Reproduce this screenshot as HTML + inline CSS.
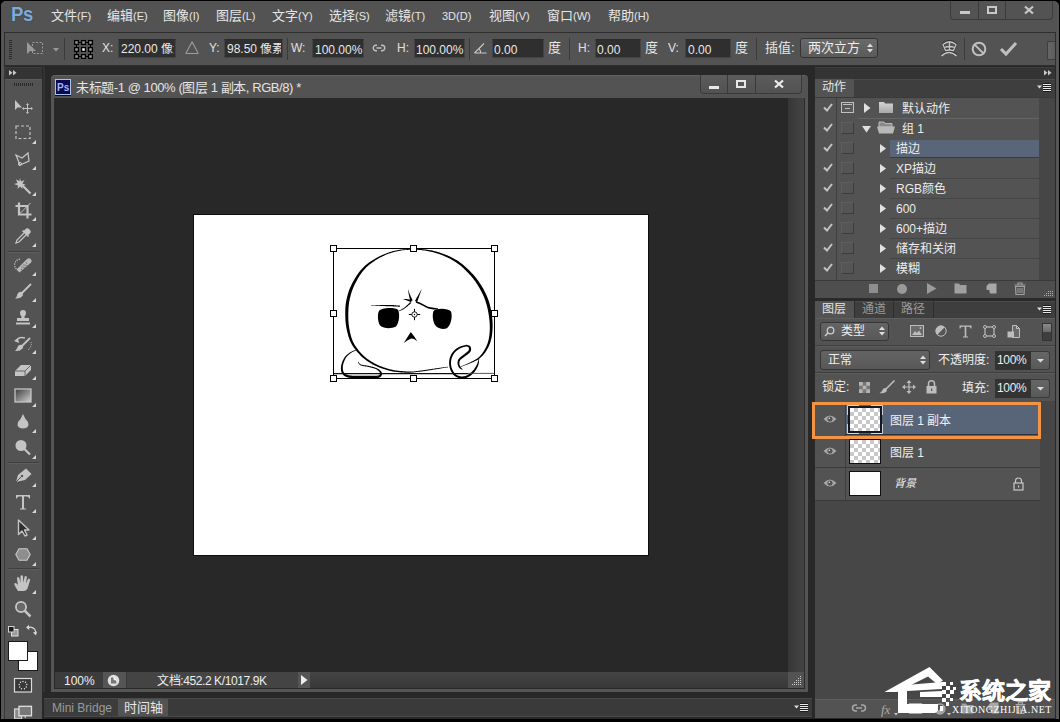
<!DOCTYPE html>
<html lang="zh-CN">
<head>
<meta charset="utf-8">
<style>
*{margin:0;padding:0;box-sizing:border-box}
html,body{width:1060px;height:722px;overflow:hidden;background:#000}
body{position:relative;font-family:"Liberation Sans",sans-serif;color:#e8e8e8;font-size:12px}
.a{position:absolute}
svg{position:absolute;overflow:visible}
.t{position:absolute;white-space:nowrap;line-height:1}
</style>
</head>
<body>
<!-- window frame -->
<div class="a" style="left:1px;top:1px;width:1058px;height:720px;background:#565656;border-radius:5px 5px 0 0"></div>
<!-- menu bar -->
<div class="a" style="left:1px;top:1px;width:1056px;height:31px;background:#535353;border-radius:5px 5px 0 0"></div>


<!-- Ps logo -->
<div class="t" style="left:11px;top:2px;font:bold 21px 'Liberation Sans',sans-serif;color:#7fa9d8;letter-spacing:-0.5px;text-shadow:0 0 1.5px #2c3a4c;transform:scaleX(0.88);transform-origin:0 0">Ps</div>
<!-- menu items -->
<div class="t" style="left:51px;top:9px;font-size:13px;color:#e6e6e6">文件<span style="font-size:11px">(F)</span></div>
<div class="t" style="left:107px;top:9px;font-size:13px;color:#e6e6e6">编辑<span style="font-size:11px">(E)</span></div>
<div class="t" style="left:163px;top:9px;font-size:13px;color:#e6e6e6">图像<span style="font-size:11px">(I)</span></div>
<div class="t" style="left:216px;top:9px;font-size:13px;color:#e6e6e6">图层<span style="font-size:11px">(L)</span></div>
<div class="t" style="left:272px;top:9px;font-size:13px;color:#e6e6e6">文字<span style="font-size:11px">(Y)</span></div>
<div class="t" style="left:329px;top:9px;font-size:13px;color:#e6e6e6">选择<span style="font-size:11px">(S)</span></div>
<div class="t" style="left:385px;top:9px;font-size:13px;color:#e6e6e6">滤镜<span style="font-size:11px">(T)</span></div>
<div class="t" style="left:442px;top:9px;font-size:13px;color:#e6e6e6"><span style="font-size:11px">3D(D)</span></div>
<div class="t" style="left:489px;top:9px;font-size:13px;color:#e6e6e6">视图<span style="font-size:11px">(V)</span></div>
<div class="t" style="left:547px;top:9px;font-size:13px;color:#e6e6e6">窗口<span style="font-size:11px">(W)</span></div>
<div class="t" style="left:608px;top:9px;font-size:13px;color:#e6e6e6">帮助<span style="font-size:11px">(H)</span></div>

<!-- workspace dark -->
<div class="a" style="left:4px;top:66px;width:1052px;height:654px;background:#282828"></div>

<!-- options bar -->
<div class="a" style="left:4px;top:32px;width:1052px;height:34px;background:#535353;border-top:1px solid #2e2e2e;border-bottom:1px solid #2e2e2e;border-left:1px solid #2e2e2e;border-right:1px solid #2e2e2e"></div>


<!-- window controls -->
<div class="a" style="left:950px;top:1px;width:103px;height:19px;background:#535353;border:1px solid #3b3b3b;border-top:none;border-radius:0 0 4px 4px"></div>
<div class="a" style="left:978px;top:1px;width:1px;height:18px;background:#3b3b3b"></div>
<div class="a" style="left:1005px;top:1px;width:1px;height:18px;background:#3b3b3b"></div>
<div class="a" style="left:960px;top:11px;width:10px;height:3px;background:#c8c8c8"></div>
<div class="a" style="left:987px;top:6px;width:10px;height:8px;border:2px solid #c8c8c8;border-top-width:2px"></div>
<svg style="left:1024px;top:6px" width="10" height="8"><path d="M1 0.5 L9 7.5 M9 0.5 L1 7.5" stroke="#c8c8c8" stroke-width="2.2"/></svg>

<!-- options bar content -->
<div class="a" style="left:9px;top:40px;width:3px;height:20px;background:repeating-linear-gradient(#2a2a2a 0 1px,transparent 1px 2px)"></div>
<svg style="left:26px;top:41px" width="18" height="14">
 <path d="M1 1 L1 13 L4 10 L10 10 Z" fill="#9a9a9a"/>
 <rect x="6.5" y="1.5" width="10" height="11" fill="none" stroke="#9a9a9a" stroke-dasharray="2 1.5"/>
</svg>
<svg style="left:53px;top:48px" width="6" height="4"><path d="M0 0 L6 0 L3 3.5 Z" fill="#9a9a9a"/></svg>
<div class="a" style="left:64px;top:38px;width:1px;height:22px;background:#3a3a3a"></div>
<svg style="left:74px;top:40px" width="20" height="20">
 <path d="M5 2.5 H7 M12 2.5 H14 M5 16.5 H7 M12 16.5 H14 M2.5 5 V7 M2.5 12 V14 M16.5 5 V7 M16.5 12 V14" stroke="#000" stroke-width="1.1"/>
 <rect x="0.6" y="0.6" width="3.8" height="3.8" fill="#999" stroke="#000" stroke-width="1.3"/><rect x="7.6" y="0.6" width="3.8" height="3.8" fill="#999" stroke="#000" stroke-width="1.3"/><rect x="14.6" y="0.6" width="3.8" height="3.8" fill="#999" stroke="#000" stroke-width="1.3"/><rect x="0.6" y="7.6" width="3.8" height="3.8" fill="#999" stroke="#000" stroke-width="1.3"/><rect x="7.6" y="7.6" width="3.8" height="3.8" fill="#fff" stroke="#000" stroke-width="1.3"/><rect x="14.6" y="7.6" width="3.8" height="3.8" fill="#999" stroke="#000" stroke-width="1.3"/><rect x="0.6" y="14.6" width="3.8" height="3.8" fill="#999" stroke="#000" stroke-width="1.3"/><rect x="7.6" y="14.6" width="3.8" height="3.8" fill="#999" stroke="#000" stroke-width="1.3"/><rect x="14.6" y="14.6" width="3.8" height="3.8" fill="#999" stroke="#000" stroke-width="1.3"/>
</svg>
<div class="t" style="left:102px;top:42px;font-size:12px;color:#e0e0e0">X:</div>
<div class="a" style="left:118px;top:39px;width:58px;height:19px;background:#2f2f2f;border:1px solid #444;border-top-color:#2a2a2a"></div>
<div class="t" style="left:121px;top:43px;font-size:12px;color:#e8e8e8;width:53px;overflow:hidden">220.00 像素</div>
<div class="t" style="left:185px;top:41px;font-size:14px;color:#cfcfcf">△</div>
<div class="t" style="left:209px;top:42px;font-size:12px;color:#e0e0e0">Y:</div>
<div class="a" style="left:224px;top:39px;width:59px;height:19px;background:#2f2f2f;border:1px solid #444;border-top-color:#2a2a2a"></div>
<div class="t" style="left:227px;top:43px;font-size:12px;color:#e8e8e8;width:54px;overflow:hidden">98.50 像素</div>
<div class="a" style="left:287px;top:38px;width:1px;height:22px;background:#3a3a3a"></div>
<div class="t" style="left:291px;top:42px;font-size:12px;color:#e0e0e0">W:</div>
<div class="a" style="left:312px;top:39px;width:52px;height:19px;background:#2f2f2f;border:1px solid #444;border-top-color:#2a2a2a"></div>
<div class="t" style="left:315px;top:44px;font-size:12px;color:#e8e8e8">100.00%</div>
<svg style="left:373px;top:44px" width="12" height="8"><path d="M4 1.2 H3 a2.8 2.8 0 0 0 0 5.6 H4 M8 1.2 H9 a2.8 2.8 0 0 1 0 5.6 H8 M3.5 4 H8.5" fill="none" stroke="#c0c0c0" stroke-width="1.4"/></svg>
<div class="t" style="left:397px;top:42px;font-size:12px;color:#e0e0e0">H:</div>
<div class="a" style="left:414px;top:39px;width:51px;height:19px;background:#2f2f2f;border:1px solid #444;border-top-color:#2a2a2a"></div>
<div class="t" style="left:416px;top:44px;font-size:12px;color:#e8e8e8">100.00%</div>
<div class="a" style="left:469px;top:38px;width:1px;height:22px;background:#3a3a3a"></div>
<svg style="left:474px;top:42px" width="13" height="12"><path d="M0.5 11 H12.5 M0.5 11 L10 1.5 M6.5 11 A6 6 0 0 0 5 6.5" fill="none" stroke="#c8c8c8" stroke-width="1.1"/></svg>
<div class="a" style="left:492px;top:39px;width:52px;height:19px;background:#2f2f2f;border:1px solid #444;border-top-color:#2a2a2a"></div>
<div class="t" style="left:494px;top:44px;font-size:12px;color:#e8e8e8">0.00</div>
<div class="t" style="left:548px;top:41px;font-size:13px;color:#e8e8e8">度</div>
<div class="a" style="left:569px;top:38px;width:1px;height:22px;background:#3a3a3a"></div>
<div class="t" style="left:578px;top:42px;font-size:12px;color:#e0e0e0">H:</div>
<div class="a" style="left:595px;top:39px;width:46px;height:19px;background:#2f2f2f;border:1px solid #444;border-top-color:#2a2a2a"></div>
<div class="t" style="left:597px;top:44px;font-size:12px;color:#e8e8e8">0.00</div>
<div class="t" style="left:645px;top:41px;font-size:13px;color:#e8e8e8">度</div>
<div class="t" style="left:668px;top:42px;font-size:12px;color:#e0e0e0">V:</div>
<div class="a" style="left:685px;top:39px;width:46px;height:19px;background:#2f2f2f;border:1px solid #444;border-top-color:#2a2a2a"></div>
<div class="t" style="left:688px;top:44px;font-size:12px;color:#e8e8e8">0.00</div>
<div class="t" style="left:735px;top:41px;font-size:13px;color:#e8e8e8">度</div>
<div class="a" style="left:756px;top:38px;width:1px;height:22px;background:#3a3a3a"></div>
<div class="t" style="left:765px;top:41px;font-size:13px;color:#e8e8e8">插值:</div>
<div class="a" style="left:800px;top:38px;width:78px;height:20px;background:linear-gradient(#6a6a6a,#5a5a5a);border:1px solid #343434;border-radius:3px"></div>
<div class="t" style="left:808px;top:41px;font-size:13px;color:#eee">两次立方</div>
<svg style="left:867px;top:43px" width="6" height="10"><path d="M0 4 L3 0.5 L6 4 Z M0 6 L3 9.5 L6 6 Z" fill="#ddd"/></svg>
<svg style="left:940px;top:39px" width="18" height="19">
 <g fill="none" stroke="#1e1e1e" stroke-width="2.6" opacity="0.55" transform="translate(0,-0.6)">
  <path d="M3 5.5 Q9.5 0 16 5.5 L13.5 11.5 Q9.5 10.5 5.5 11.5 Z"/><path d="M1.5 17 Q9 10 16.5 17"/>
 </g>
 <g fill="none" stroke="#c4c4c4" stroke-width="1.3">
  <path d="M3 5.5 Q9.5 0 16 5.5 L13.5 11.5 Q9.5 10.5 5.5 11.5 Z"/>
  <path d="M4.3 8.5 Q9.5 6.5 14.8 8.5 M9.5 2.3 V11"/>
  <path d="M1.5 17 Q9 10 16.5 17" stroke-width="1.6"/>
 </g>
</svg>
<div class="a" style="left:964px;top:38px;width:1px;height:22px;background:#3a3a3a"></div>
<svg style="left:971px;top:41px" width="16" height="16"><circle cx="8" cy="8" r="6.3" fill="none" stroke="#c0c0c0" stroke-width="2"/><path d="M3.6 3.6 L12.4 12.4" stroke="#c0c0c0" stroke-width="2"/></svg>
<svg style="left:1000px;top:41px" width="17" height="15"><path d="M1 8 L6 13 L16 2" fill="none" stroke="#c0c0c0" stroke-width="3"/></svg>
<div class="a" style="left:1047px;top:41px;width:8px;height:19px;background:linear-gradient(90deg,#666,#5c5c5c);border:1px solid #3e3e3e;border-right:none;border-radius:2px 0 0 2px"></div>


<!-- tools panel -->
<div class="a" style="left:4px;top:66px;width:1px;height:654px;background:#3a3a3a"></div>
<div class="a" style="left:5px;top:67px;width:37px;height:12px;background:#343434;border-top:1px solid #3e3e3e"></div>
<svg style="left:9px;top:70px" width="8" height="6"><path d="M0 0 L3.5 2.75 L0 5.5 Z M4 0 L7.5 2.75 L4 5.5 Z" fill="#c8c8c8"/></svg>
<div class="a" style="left:5px;top:79px;width:37px;height:640px;background:#535353;border-top:1px solid #5c5c5c"></div>
<div class="a" style="left:14px;top:83px;width:19px;height:3px;background:repeating-linear-gradient(90deg,#2a2a2a 0 1px,transparent 1px 2px)"></div>
<!-- move -->
<svg style="left:14px;top:99px" width="20" height="15">
 <path d="M1 1 L1 11 L3.5 8.5 L8 8.5 Z" fill="#c4c4c4"/>
 <path d="M13.5 5 V14 M9 9.5 H18" stroke="#c4c4c4" stroke-width="1"/>
 <path d="M13.5 4 L12 6 H15 Z M13.5 15 L12 13 H15 Z M8 9.5 L10 8 V11 Z M19 9.5 L17 8 V11 Z" fill="#c4c4c4"/>
</svg>
<!-- marquee -->
<svg style="left:15px;top:125px" width="16" height="15"><rect x="1" y="1" width="14" height="12.5" fill="none" stroke="#c4c4c4" stroke-width="1.2" stroke-dasharray="3 2"/></svg>
<svg style="left:32px;top:140px" width="4" height="4"><path d="M4 0 L4 4 L0 4 Z" fill="#d8d8d8"/></svg>
<!-- lasso -->
<svg style="left:14px;top:151px" width="18" height="17"><path d="M2 4 L8 7 L14 2 L15 10 L6 14 Z" fill="none" stroke="#c4c4c4" stroke-width="1.3"/><circle cx="6" cy="13" r="1.6" fill="none" stroke="#c4c4c4"/></svg>
<svg style="left:32px;top:166px" width="4" height="4"><path d="M4 0 L4 4 L0 4 Z" fill="#d8d8d8"/></svg>
<!-- wand -->
<svg style="left:13px;top:176px" width="19" height="19">
 <path d="M7 2 L8 5.5 L11.5 4 L9.5 7.5 L13 9 L9 9.5 L9.5 13 L7 10.5 L4.5 13 L5 9.5 L1 8 L4.5 7 L3 3.5 L6.5 5 Z" fill="#c4c4c4"/>
 <path d="M9 9 L17.5 17.5" stroke="#c4c4c4" stroke-width="2.2"/>
</svg>
<svg style="left:32px;top:192px" width="4" height="4"><path d="M4 0 L4 4 L0 4 Z" fill="#d8d8d8"/></svg>
<!-- crop -->
<svg style="left:15px;top:202px" width="17" height="17"><path d="M4 0.5 V12.5 H16.5 M0.5 4 H12.5 V16.5" fill="none" stroke="#c4c4c4" stroke-width="2.2"/><path d="M5 11.5 L15.5 1" stroke="#c4c4c4" stroke-width="1"/></svg>
<svg style="left:32px;top:217px" width="4" height="4"><path d="M4 0 L4 4 L0 4 Z" fill="#d8d8d8"/></svg>
<!-- eyedropper -->
<svg style="left:14px;top:227px" width="18" height="18">
 <path d="M11 2.5 Q13.5 0 15.5 2.5 Q18 4.5 15.5 7 L13.5 8.5 L9.5 4.5 Z" fill="#c4c4c4"/>
 <path d="M10 6 L3 13 L2 16 L5 15 L12 8" fill="none" stroke="#c4c4c4" stroke-width="1.3"/>
 <path d="M8.5 3.5 L14.5 9.5" stroke="#c4c4c4" stroke-width="1.6"/>
</svg>
<svg style="left:32px;top:243px" width="4" height="4"><path d="M4 0 L4 4 L0 4 Z" fill="#d8d8d8"/></svg>
<div class="a" style="left:8px;top:251px;width:31px;height:1px;background:#3f3f3f"></div>
<div class="a" style="left:8px;top:252px;width:31px;height:1px;background:#5e5e5e"></div>
<!-- healing -->
<svg style="left:13px;top:257px" width="20" height="17">
 <path d="M6.5 15.5 L3.5 12.5 L14 2 Q16.5 0.5 18 2.5 Q19.5 4.5 17.5 6 Z" fill="#b8b8b8"/>
 <path d="M7 2 Q2 3 1.5 8 Q2 12 5 13" fill="none" stroke="#c8c8c8" stroke-width="1.2" stroke-dasharray="1.2 1.2"/>
 <g fill="#777"><circle cx="9" cy="10" r="0.8"/><circle cx="11" cy="8" r="0.8"/><circle cx="11" cy="10.5" r="0.8"/><circle cx="13" cy="8.5" r="0.8"/><circle cx="13.5" cy="6" r="0.8"/><circle cx="8.5" cy="12.5" r="0.8"/></g>
</svg>
<svg style="left:32px;top:272px" width="4" height="4"><path d="M4 0 L4 4 L0 4 Z" fill="#d8d8d8"/></svg>
<!-- brush -->
<svg style="left:14px;top:283px" width="18" height="17"><path d="M17 1 L8 10" stroke="#c4c4c4" stroke-width="1.8"/><path d="M8 9 Q5 8 3.5 11 Q3 14 1 15.5 Q6 16 8.5 13 Q10 11 8 9 Z" fill="#c4c4c4"/></svg>
<svg style="left:32px;top:298px" width="4" height="4"><path d="M4 0 L4 4 L0 4 Z" fill="#d8d8d8"/></svg>
<!-- stamp -->
<svg style="left:14px;top:309px" width="18" height="17"><path d="M9 1 Q12 1 12 4 Q12 6 10.5 7.5 V9 H15 V12 H3 V9 H7.5 V7.5 Q6 6 6 4 Q6 1 9 1 Z" fill="#c4c4c4"/><rect x="2" y="13.5" width="14" height="2" fill="#c4c4c4"/></svg>
<svg style="left:32px;top:324px" width="4" height="4"><path d="M4 0 L4 4 L0 4 Z" fill="#d8d8d8"/></svg>
<!-- history brush -->
<svg style="left:13px;top:335px" width="20" height="17">
 <path d="M3 6 Q6 1 12 3" fill="none" stroke="#c4c4c4" stroke-width="1.5"/><path d="M1 6 L5 3 L6 8 Z" fill="#c4c4c4"/>
 <path d="M17 3 L9 11" stroke="#c4c4c4" stroke-width="1.8"/><path d="M9 10 Q6 9 4.5 12 Q4 14.5 2 16 Q7 16.5 9.5 13.5 Q11 12 9 10 Z" fill="#c4c4c4"/>
 <path d="M18 7 Q19 12 15 15" fill="none" stroke="#c4c4c4" stroke-dasharray="1 1"/>
</svg>
<svg style="left:32px;top:350px" width="4" height="4"><path d="M4 0 L4 4 L0 4 Z" fill="#d8d8d8"/></svg>
<!-- eraser -->
<svg style="left:14px;top:362px" width="18" height="15"><path d="M1 9 L7 3 H17 V8 L11 14 H1 Z" fill="#c4c4c4"/><path d="M1 9 H11 L17 3 M11 9 V14" fill="none" stroke="#666" stroke-width="1"/></svg>
<svg style="left:32px;top:376px" width="4" height="4"><path d="M4 0 L4 4 L0 4 Z" fill="#d8d8d8"/></svg>
<!-- gradient -->
<svg style="left:14px;top:388px" width="18" height="16"><defs><linearGradient id="gg" x1="0" y1="0" x2="1" y2="1"><stop offset="0" stop-color="#3a3a3a"/><stop offset="1" stop-color="#d0d0d0"/></linearGradient></defs><rect x="1" y="1" width="16" height="13" fill="url(#gg)" stroke="#c4c4c4" stroke-width="1.3"/></svg>
<svg style="left:32px;top:403px" width="4" height="4"><path d="M4 0 L4 4 L0 4 Z" fill="#d8d8d8"/></svg>
<!-- blur drop -->
<svg style="left:16px;top:413px" width="14" height="17"><path d="M7 1 Q9 6 12 9 Q14 15 7 15.5 Q0 15 2 9 Q5 6 7 1 Z" fill="#c4c4c4"/></svg>
<svg style="left:32px;top:429px" width="4" height="4"><path d="M4 0 L4 4 L0 4 Z" fill="#d8d8d8"/></svg>
<!-- dodge -->
<svg style="left:14px;top:439px" width="18" height="18"><circle cx="7" cy="6.5" r="5.5" fill="#c4c4c4"/><path d="M10.5 10 L16 15.5" stroke="#c4c4c4" stroke-width="2.2"/></svg>
<svg style="left:32px;top:455px" width="4" height="4"><path d="M4 0 L4 4 L0 4 Z" fill="#d8d8d8"/></svg>
<div class="a" style="left:8px;top:462px;width:31px;height:1px;background:#3f3f3f"></div>
<div class="a" style="left:8px;top:463px;width:31px;height:1px;background:#5e5e5e"></div>
<!-- pen -->
<svg style="left:14px;top:467px" width="19" height="17"><path d="M2 15 L4 8 L12 1.5 L17.5 7 L11 13 Z" fill="#c4c4c4"/><path d="M2 15 L7.5 9.5" stroke="#555" stroke-width="1"/><circle cx="8" cy="9" r="1.2" fill="#555"/></svg>
<svg style="left:32px;top:483px" width="4" height="4"><path d="M4 0 L4 4 L0 4 Z" fill="#d8d8d8"/></svg>
<!-- type -->
<svg style="left:15px;top:494px" width="16" height="16"><path d="M1 1 H15 V4.5 H14 Q14 2.5 12 2.5 H9 V14 Q9 14.5 11 14.5 V15.5 H5 V14.5 Q7 14.5 7 14 V2.5 H4 Q2 2.5 2 4.5 H1 Z" fill="#c4c4c4"/></svg>
<svg style="left:32px;top:509px" width="4" height="4"><path d="M4 0 L4 4 L0 4 Z" fill="#d8d8d8"/></svg>
<!-- path select -->
<svg style="left:17px;top:519px" width="14" height="18"><path d="M1.5 1 L1.5 15.5 L5 12 L8 17 L10 16 L7.5 11 L12 11 Z" fill="#2e2e2e" stroke="#c4c4c4" stroke-width="1.4" stroke-linejoin="round"/></svg>
<svg style="left:32px;top:536px" width="4" height="4"><path d="M4 0 L4 4 L0 4 Z" fill="#d8d8d8"/></svg>
<!-- shape hexagon -->
<svg style="left:15px;top:548px" width="16" height="13"><path d="M4 0.8 H12 L15.2 6.5 L12 12.2 H4 L0.8 6.5 Z" fill="#8e8e8e" stroke="#c8c8c8" stroke-width="1.1"/></svg>
<svg style="left:32px;top:562px" width="4" height="4"><path d="M4 0 L4 4 L0 4 Z" fill="#d8d8d8"/></svg>
<div class="a" style="left:8px;top:568px;width:31px;height:1px;background:#3f3f3f"></div>
<div class="a" style="left:8px;top:569px;width:31px;height:1px;background:#5e5e5e"></div>
<!-- hand -->
<svg style="left:13px;top:575px" width="19" height="17"><path d="M5 16 Q3 13 1.5 10 Q0.8 8.5 2 8 Q3 7.8 4 9 L5 10 L4 3.5 Q3.8 2 5 2 Q6.2 2 6.5 3.5 L7.5 8 L7.5 1.5 Q7.5 0.3 8.7 0.3 Q9.9 0.3 10 1.5 L10.3 8 L11.5 2 Q11.8 0.8 12.9 1 Q14 1.3 13.8 2.5 L13 8.5 L14.8 4.5 Q15.4 3.3 16.4 3.7 Q17.4 4.2 17 5.4 L15 12 Q14 16 10.5 16 Z" fill="#c4c4c4"/></svg>
<svg style="left:32px;top:590px" width="4" height="4"><path d="M4 0 L4 4 L0 4 Z" fill="#d8d8d8"/></svg>
<!-- zoom -->
<svg style="left:14px;top:600px" width="18" height="18"><circle cx="7" cy="7" r="5" fill="none" stroke="#c4c4c4" stroke-width="2"/><circle cx="7" cy="7" r="3.5" fill="#6a6a6a"/><path d="M10.5 10.5 L16.5 16.5" stroke="#c4c4c4" stroke-width="2.5"/></svg>
<!-- default colors / swap -->
<svg style="left:8px;top:626px" width="11" height="11"><rect x="3.5" y="3.5" width="6.5" height="6.5" fill="#9a9a9a" stroke="#e0e0e0" stroke-width="1"/><rect x="0.5" y="0.5" width="5.5" height="5.5" fill="#1e1e1e" stroke="#d0d0d0" stroke-width="1"/></svg>
<svg style="left:26px;top:624px" width="11" height="12"><path d="M1.5 4 Q5 2 8.5 5 Q10 7 9.5 9.5" fill="none" stroke="#d8d8d8" stroke-width="1.2"/><path d="M0 3.5 L3 0.8 L3.3 6 Z M7 8.5 L10 11.5 L11 7.5 Z" fill="#d8d8d8"/></svg>
<div class="a" style="left:18px;top:651px;width:20px;height:20px;background:#fff;border:1px solid #1a1a1a"></div>
<div class="a" style="left:8px;top:641px;width:20px;height:20px;background:#fff;border:1px solid #1a1a1a"></div>
<!-- quick mask -->
<svg style="left:14px;top:678px" width="18" height="15"><rect x="0.5" y="0.5" width="17" height="13.5" fill="#383838" stroke="#dadada" stroke-width="1.2"/><g fill="#e8e8e8"><circle cx="9" cy="3.5" r="0.7"/><circle cx="11.5" cy="4.2" r="0.7"/><circle cx="12.8" cy="6.5" r="0.7"/><circle cx="12.3" cy="9" r="0.7"/><circle cx="10.5" cy="10.8" r="0.7"/><circle cx="7.5" cy="10.8" r="0.7"/><circle cx="5.7" cy="9" r="0.7"/><circle cx="5.2" cy="6.5" r="0.7"/><circle cx="6.5" cy="4.2" r="0.7"/></g></svg>
<!-- screen mode -->
<svg style="left:14px;top:705px" width="19" height="14"><rect x="0.6" y="4" width="7" height="10" fill="#8a8a8a" stroke="#d8d8d8" stroke-width="1.2"/><rect x="5" y="1.3" width="12.5" height="9.5" fill="#787878" stroke="#e0e0e0" stroke-width="1.3"/><path d="M11.2 10.8 V13" stroke="#e0e0e0"/></svg>

<!-- document window -->
<div class="a" style="left:51px;top:75px;width:757px;height:617px;background:#555;border-radius:4px 4px 0 0;border-top:1px solid #626262"></div>
<div class="a" style="left:54px;top:97px;width:751px;height:592px;background:#2a2a2a"></div>
<div class="a" style="left:43px;top:66px;width:2px;height:626px;background:#333"></div>
<div class="a" style="left:52px;top:76px;width:755px;height:22px;background:#535353;border-radius:4px 4px 0 0"></div>
<div class="a" style="left:55px;top:79px;width:16px;height:16px;background:#0c0a55;border:1px solid #a9c2ec;box-shadow:0 1px 0 #111"></div>
<div class="t" style="left:57px;top:82px;font:bold 10px 'Liberation Sans',sans-serif;color:#a3b9f7;letter-spacing:0px">Ps</div>
<div class="t" style="left:76px;top:81px;font-size:13px;color:#e4e4e4;letter-spacing:-0.42px">未标题-1 @ 100% (图层 1 副本, RGB/8) *</div>
<!-- doc buttons -->
<div class="a" style="left:700px;top:75px;width:102px;height:19px;background:linear-gradient(#5c5c5c,#525252);border:1px solid #3a3a3a;border-top:none;border-radius:0 0 4px 4px"></div>
<div class="a" style="left:727px;top:75px;width:1px;height:18px;background:#3a3a3a"></div>
<div class="a" style="left:755px;top:75px;width:1px;height:18px;background:#3a3a3a"></div>
<div class="a" style="left:709px;top:86px;width:10px;height:3px;background:#e8e8e8"></div>
<div class="a" style="left:736px;top:80px;width:10px;height:8px;border:2px solid #e8e8e8"></div>
<svg style="left:774px;top:80px" width="10" height="8"><path d="M1 0.5 L9 7.5 M9 0.5 L1 7.5" stroke="#eee" stroke-width="2.2"/></svg>
<!-- canvas area -->
<div class="a" style="left:55px;top:98px;width:733px;height:574px;background:#282828"></div>
<!-- vertical scrollbar -->
<div class="a" style="left:788px;top:98px;width:16px;height:574px;background:linear-gradient(90deg,#363636,#3e3e3e 50%,#434343)"></div>
<!-- horizontal scrollbar -->
<div class="a" style="left:310px;top:672px;width:478px;height:16px;background:linear-gradient(#444,#3e3e3e 50%,#383838)"></div>
<!-- corner -->
<div class="a" style="left:788px;top:672px;width:16px;height:16px;background:#535353"></div>
<svg style="left:791px;top:675px" width="12" height="12"><g fill="#d0d0d0">
<rect x="9" y="1" width="1" height="1"/><rect x="9" y="3" width="1" height="1"/><rect x="7" y="3" width="1" height="1"/>
<rect x="9" y="5" width="1" height="1"/><rect x="7" y="5" width="1" height="1"/><rect x="5" y="5" width="1" height="1"/>
<rect x="9" y="7" width="1" height="1"/><rect x="7" y="7" width="1" height="1"/><rect x="5" y="7" width="1" height="1"/><rect x="3" y="7" width="1" height="1"/>
<rect x="9" y="9" width="1" height="1"/><rect x="7" y="9" width="1" height="1"/><rect x="5" y="9" width="1" height="1"/><rect x="3" y="9" width="1" height="1"/><rect x="1" y="9" width="1" height="1"/>
</g></svg>
<!-- status bar -->
<div class="a" style="left:55px;top:672px;width:48px;height:16px;background:#3c3c3c"></div>
<div class="t" style="left:64px;top:675px;font-size:12px;color:#eee">100%</div>
<div class="a" style="left:103px;top:672px;width:23px;height:16px;background:#555"></div>
<svg style="left:107px;top:674px" width="13" height="13"><circle cx="6.5" cy="6.5" r="5.8" fill="#e0e0e0"/><path d="M4 3.5 H6.5 V6 L9 6.5 L9.5 9.5 H4 Z" fill="#777"/><path d="M6.5 3.5 L9.5 6.5" stroke="#fff"/></svg>
<div class="a" style="left:126px;top:672px;width:172px;height:16px;background:#444;border-left:1px solid #3a3a3a"></div>
<div class="t" style="left:157px;top:675px;font-size:12px;color:#eee;letter-spacing:-0.4px">文档:452.2 K/1017.9K</div>
<div class="a" style="left:298px;top:672px;width:12px;height:16px;background:#555"></div>
<svg style="left:301px;top:675px" width="7" height="10"><path d="M0 0 L6.5 5 L0 10 Z" fill="#eee"/></svg>

<!-- canvas -->
<div class="a" style="left:193px;top:214px;width:456px;height:342px;background:#0e0e0e"></div>
<div class="a" style="left:194px;top:215px;width:454px;height:340px;background:#fff"></div>
<svg style="left:0;top:0" width="1060" height="722">
 <path d="M414.98 248.90 L413.73 248.96 L412.49 248.99 L411.24 249.02 L409.99 249.04 L408.74 249.06 L407.48 249.09 L406.23 249.13 L404.97 249.19 L403.71 249.27 L402.45 249.38 L401.18 249.52 L399.92 249.71 L398.65 249.92 L397.39 250.16 L396.13 250.42 L394.87 250.70 L393.61 251.00 L392.35 251.33 L391.08 251.69 L389.82 252.07 L388.55 252.48 L387.28 252.92 L386.02 253.40 L384.75 253.90 L383.46 254.45 L382.14 255.03 L380.81 255.65 L379.47 256.31 L378.13 256.99 L376.80 257.70 L375.48 258.43 L374.19 259.18 L372.93 259.93 L371.71 260.70 L370.54 261.47 L369.44 262.24 L368.39 263.00 L367.39 263.76 L366.44 264.53 L365.53 265.30 L364.65 266.09 L363.80 266.90 L362.97 267.72 L362.17 268.57 L361.38 269.45 L360.59 270.35 L359.82 271.30 L359.04 272.28 L358.25 273.32 L357.47 274.42 L356.70 275.56 L355.94 276.73 L355.19 277.94 L354.46 279.16 L353.76 280.39 L353.08 281.62 L352.42 282.85 L351.80 284.06 L351.22 285.25 L350.67 286.41 L350.17 287.56 L349.69 288.70 L349.25 289.84 L348.85 290.96 L348.47 292.08 L348.12 293.19 L347.80 294.30 L347.50 295.39 L347.22 296.48 L346.96 297.56 L346.71 298.62 L346.48 299.69 L346.27 300.74 L346.08 301.78 L345.92 302.79 L345.77 303.80 L345.65 304.80 L345.55 305.79 L345.46 306.79 L345.39 307.79 L345.34 308.81 L345.30 309.84 L345.27 310.89 L345.25 311.97 L345.24 313.08 L345.24 314.21 L345.25 315.37 L345.28 316.54 L345.32 317.73 L345.37 318.94 L345.44 320.15 L345.53 321.36 L345.64 322.58 L345.78 323.80 L345.93 325.01 L346.12 326.20 L346.32 327.40 L346.54 328.62 L346.79 329.85 L347.06 331.09 L347.35 332.33 L347.66 333.56 L347.98 334.78 L348.33 335.97 L348.69 337.15 L349.07 338.29 L349.47 339.39 L349.88 340.44 L350.31 341.44 L350.76 342.40 L351.22 343.32 L351.70 344.21 L352.19 345.07 L352.70 345.90 L353.23 346.71 L353.78 347.51 L354.35 348.30 L354.94 349.08 L355.55 349.86 L356.18 350.65 L356.83 351.45 L357.51 352.25 L358.20 353.04 L358.92 353.83 L359.66 354.61 L360.42 355.39 L361.20 356.15 L362.00 356.90 L362.82 357.64 L363.67 358.37 L364.54 359.07 L365.42 359.76 L366.33 360.42 L367.27 361.08 L368.23 361.72 L369.21 362.35 L370.21 362.96 L371.23 363.56 L372.27 364.14 L373.33 364.71 L374.39 365.25 L375.47 365.78 L376.56 366.29 L377.66 366.78 L378.78 367.25 L379.92 367.70 L381.09 368.14 L382.28 368.57 L383.49 368.97 L384.70 369.36 L385.91 369.72 L387.12 370.07 L388.32 370.39 L389.51 370.70 L390.69 370.98 L391.84 371.23 L392.99 371.46 L394.15 371.66 L395.31 371.84 L396.46 371.99 L397.61 372.12 L398.74 372.23 L399.86 372.33 L400.95 372.41 L402.01 372.48 L403.03 372.54 L404.02 372.60 L404.96 372.65 L405.86 372.69 L406.71 372.71 L407.52 372.72 L408.30 372.71 L409.04 372.70 L409.76 372.67 L410.47 372.64 L411.16 372.61 L411.86 372.57 L412.56 372.54 L413.27 372.52 L414.00 372.50 L414.00 371.50 L413.26 371.49 L412.54 371.49 L411.83 371.50 L411.13 371.50 L410.44 371.51 L409.74 371.52 L409.03 371.52 L408.30 371.51 L407.54 371.49 L406.75 371.46 L405.92 371.41 L405.04 371.35 L404.10 371.28 L403.12 371.20 L402.10 371.12 L401.05 371.04 L399.98 370.94 L398.88 370.83 L397.77 370.71 L396.65 370.57 L395.52 370.40 L394.39 370.22 L393.27 370.01 L392.16 369.77 L391.04 369.50 L389.89 369.21 L388.72 368.90 L387.55 368.56 L386.36 368.21 L385.18 367.83 L384.00 367.44 L382.83 367.03 L381.67 366.60 L380.53 366.15 L379.42 365.70 L378.34 365.22 L377.28 364.73 L376.23 364.22 L375.19 363.69 L374.16 363.15 L373.14 362.58 L372.14 362.00 L371.16 361.41 L370.20 360.80 L369.25 360.18 L368.34 359.54 L367.44 358.90 L366.58 358.24 L365.74 357.58 L364.92 356.89 L364.12 356.19 L363.33 355.47 L362.57 354.73 L361.83 353.99 L361.11 353.23 L360.42 352.47 L359.74 351.69 L359.08 350.92 L358.44 350.13 L357.82 349.35 L357.23 348.57 L356.66 347.80 L356.11 347.03 L355.59 346.27 L355.09 345.50 L354.61 344.73 L354.15 343.93 L353.71 343.12 L353.29 342.28 L352.88 341.42 L352.49 340.51 L352.12 339.56 L351.75 338.56 L351.41 337.51 L351.08 336.42 L350.76 335.28 L350.46 334.12 L350.18 332.94 L349.92 331.74 L349.67 330.54 L349.45 329.34 L349.24 328.14 L349.05 326.95 L348.88 325.80 L348.74 324.65 L348.62 323.49 L348.52 322.33 L348.44 321.16 L348.38 319.98 L348.34 318.81 L348.32 317.65 L348.30 316.49 L348.30 315.35 L348.31 314.22 L348.33 313.11 L348.35 312.03 L348.38 310.98 L348.42 309.95 L348.46 308.96 L348.52 307.99 L348.58 307.03 L348.67 306.08 L348.76 305.14 L348.87 304.20 L349.00 303.25 L349.15 302.29 L349.32 301.32 L349.52 300.31 L349.73 299.28 L349.96 298.25 L350.20 297.21 L350.46 296.16 L350.73 295.11 L351.03 294.06 L351.34 292.99 L351.69 291.93 L352.05 290.85 L352.45 289.77 L352.87 288.68 L353.33 287.59 L353.82 286.46 L354.35 285.30 L354.92 284.11 L355.52 282.90 L356.14 281.68 L356.79 280.47 L357.45 279.26 L358.14 278.08 L358.83 276.92 L359.54 275.81 L360.25 274.74 L360.96 273.72 L361.68 272.75 L362.39 271.82 L363.11 270.92 L363.83 270.06 L364.57 269.23 L365.33 268.42 L366.11 267.62 L366.92 266.84 L367.76 266.07 L368.65 265.31 L369.58 264.54 L370.56 263.76 L371.61 262.98 L372.71 262.20 L373.87 261.41 L375.07 260.62 L376.31 259.85 L377.58 259.08 L378.86 258.34 L380.16 257.62 L381.45 256.93 L382.74 256.28 L384.01 255.67 L385.25 255.10 L386.48 254.57 L387.72 254.08 L388.95 253.62 L390.18 253.20 L391.42 252.80 L392.65 252.43 L393.89 252.09 L395.13 251.77 L396.37 251.47 L397.61 251.19 L398.85 250.93 L400.08 250.69 L401.32 250.48 L402.55 250.31 L403.79 250.17 L405.03 250.06 L406.27 249.97 L407.52 249.90 L408.76 249.84 L410.01 249.78 L411.26 249.72 L412.51 249.66 L413.77 249.59 L415.02 249.50 Z M412.98 249.50 L413.97 249.58 L414.95 249.65 L415.92 249.71 L416.88 249.77 L417.83 249.82 L418.79 249.88 L419.76 249.95 L420.74 250.04 L421.74 250.14 L422.77 250.26 L423.82 250.41 L424.91 250.59 L426.04 250.80 L427.21 251.02 L428.40 251.25 L429.61 251.50 L430.84 251.76 L432.09 252.05 L433.35 252.35 L434.62 252.69 L435.90 253.04 L437.17 253.43 L438.45 253.85 L439.72 254.30 L441.01 254.79 L442.33 255.32 L443.68 255.87 L445.05 256.46 L446.42 257.07 L447.79 257.71 L449.14 258.37 L450.48 259.05 L451.79 259.74 L453.06 260.45 L454.28 261.17 L455.44 261.89 L456.56 262.63 L457.63 263.38 L458.67 264.16 L459.68 264.95 L460.66 265.77 L461.63 266.59 L462.57 267.44 L463.49 268.30 L464.41 269.18 L465.31 270.07 L466.22 270.97 L467.11 271.88 L468.01 272.80 L468.88 273.73 L469.74 274.67 L470.59 275.61 L471.42 276.57 L472.23 277.54 L473.04 278.53 L473.82 279.54 L474.60 280.56 L475.36 281.61 L476.10 282.68 L476.84 283.78 L477.56 284.91 L478.28 286.08 L479.00 287.28 L479.70 288.51 L480.39 289.75 L481.07 291.01 L481.72 292.28 L482.35 293.56 L482.95 294.83 L483.52 296.09 L484.06 297.34 L484.56 298.58 L485.02 299.79 L485.46 301.01 L485.86 302.23 L486.23 303.45 L486.58 304.67 L486.91 305.89 L487.21 307.11 L487.49 308.34 L487.76 309.57 L488.01 310.80 L488.25 312.03 L488.47 313.26 L488.68 314.50 L488.88 315.74 L489.05 316.99 L489.21 318.24 L489.35 319.49 L489.47 320.74 L489.58 321.99 L489.66 323.22 L489.73 324.44 L489.77 325.64 L489.80 326.82 L489.80 327.98 L489.78 329.11 L489.75 330.24 L489.69 331.36 L489.62 332.47 L489.53 333.57 L489.41 334.64 L489.28 335.71 L489.13 336.75 L488.96 337.77 L488.77 338.77 L488.57 339.74 L488.34 340.69 L488.10 341.60 L487.82 342.50 L487.53 343.38 L487.21 344.24 L486.87 345.08 L486.52 345.91 L486.15 346.72 L485.77 347.50 L485.37 348.27 L484.97 349.03 L484.56 349.76 L484.15 350.47 L483.74 351.16 L483.31 351.83 L482.87 352.47 L482.42 353.10 L481.96 353.71 L481.49 354.30 L481.01 354.87 L480.53 355.42 L480.03 355.95 L479.53 356.46 L479.03 356.96 L478.52 357.42 L478.01 357.86 L477.49 358.27 L476.95 358.66 L476.40 359.02 L475.84 359.37 L475.27 359.70 L474.70 360.02 L474.12 360.33 L473.53 360.64 L472.94 360.94 L472.36 361.24 L471.78 361.55 L471.21 361.85 L470.63 362.14 L470.05 362.42 L469.46 362.70 L468.87 362.97 L468.29 363.23 L467.70 363.49 L467.12 363.74 L466.55 363.99 L465.98 364.24 L465.43 364.48 L464.88 364.72 L464.35 364.96 L463.84 365.19 L463.33 365.42 L462.83 365.64 L462.34 365.86 L461.85 366.08 L461.37 366.29 L460.89 366.50 L460.41 366.71 L459.92 366.93 L459.43 367.14 L458.94 367.36 L459.06 367.64 L459.56 367.44 L460.06 367.25 L460.55 367.06 L461.04 366.87 L461.53 366.68 L462.02 366.49 L462.52 366.29 L463.02 366.10 L463.53 365.90 L464.05 365.70 L464.58 365.49 L465.12 365.28 L465.67 365.06 L466.23 364.85 L466.81 364.63 L467.39 364.41 L467.99 364.19 L468.59 363.96 L469.19 363.72 L469.80 363.49 L470.41 363.24 L471.02 362.98 L471.62 362.72 L472.22 362.45 L472.81 362.18 L473.41 361.91 L474.02 361.64 L474.63 361.37 L475.24 361.09 L475.85 360.80 L476.47 360.49 L477.08 360.16 L477.69 359.81 L478.30 359.43 L478.90 359.02 L479.48 358.58 L480.05 358.11 L480.62 357.62 L481.18 357.11 L481.73 356.58 L482.28 356.03 L482.82 355.45 L483.35 354.85 L483.87 354.23 L484.39 353.59 L484.89 352.92 L485.38 352.24 L485.85 351.53 L486.31 350.80 L486.77 350.06 L487.22 349.29 L487.66 348.50 L488.10 347.68 L488.52 346.84 L488.93 345.98 L489.32 345.09 L489.69 344.18 L490.03 343.25 L490.36 342.29 L490.66 341.31 L490.93 340.32 L491.18 339.29 L491.42 338.25 L491.63 337.18 L491.83 336.09 L492.00 334.98 L492.15 333.86 L492.28 332.71 L492.39 331.56 L492.48 330.39 L492.55 329.21 L492.60 328.02 L492.63 326.82 L492.63 325.59 L492.61 324.34 L492.58 323.08 L492.52 321.80 L492.44 320.51 L492.34 319.21 L492.22 317.91 L492.08 316.61 L491.91 315.31 L491.73 314.02 L491.53 312.74 L491.31 311.47 L491.07 310.20 L490.82 308.93 L490.55 307.66 L490.26 306.39 L489.94 305.11 L489.60 303.83 L489.23 302.55 L488.84 301.27 L488.41 299.99 L487.94 298.71 L487.44 297.42 L486.90 296.14 L486.32 294.84 L485.71 293.53 L485.06 292.22 L484.38 290.91 L483.68 289.61 L482.96 288.32 L482.22 287.05 L481.47 285.80 L480.71 284.57 L479.94 283.38 L479.16 282.22 L478.38 281.10 L477.59 280.00 L476.78 278.92 L475.95 277.87 L475.12 276.84 L474.27 275.83 L473.40 274.84 L472.53 273.87 L471.64 272.91 L470.73 271.97 L469.81 271.04 L468.89 270.12 L467.95 269.21 L467.01 268.31 L466.06 267.43 L465.10 266.55 L464.12 265.69 L463.12 264.84 L462.11 264.01 L461.06 263.19 L459.99 262.39 L458.88 261.61 L457.74 260.85 L456.56 260.11 L455.33 259.38 L454.05 258.67 L452.73 257.97 L451.37 257.29 L449.99 256.62 L448.59 255.98 L447.18 255.36 L445.77 254.76 L444.36 254.20 L442.98 253.66 L441.61 253.16 L440.28 252.70 L438.96 252.27 L437.64 251.88 L436.32 251.52 L435.01 251.19 L433.70 250.89 L432.41 250.62 L431.13 250.37 L429.87 250.14 L428.63 249.93 L427.42 249.74 L426.24 249.57 L425.09 249.41 L423.97 249.27 L422.89 249.16 L421.83 249.08 L420.81 249.03 L419.81 249.00 L418.83 248.98 L417.86 248.97 L416.90 248.97 L415.94 248.96 L414.98 248.95 L414.01 248.93 L413.02 248.90 Z M413.06 372.45 L414.05 372.33 L415.04 372.21 L416.03 372.10 L417.02 371.99 L418.01 371.87 L419.00 371.76 L419.99 371.64 L420.99 371.52 L421.99 371.40 L423.01 371.27 L424.03 371.14 L425.07 371.00 L426.13 370.84 L427.22 370.68 L428.32 370.52 L429.45 370.34 L430.57 370.16 L431.70 369.98 L432.82 369.80 L433.93 369.62 L435.01 369.45 L436.07 369.27 L437.09 369.11 L438.07 368.94 L439.00 368.79 L439.90 368.64 L440.77 368.50 L441.61 368.35 L442.44 368.21 L443.24 368.07 L444.04 367.94 L444.83 367.80 L445.62 367.66 L446.41 367.53 L447.22 367.39 L448.04 367.25 L447.96 366.75 L447.14 366.86 L446.33 366.96 L445.53 367.06 L444.73 367.16 L443.93 367.26 L443.13 367.36 L442.32 367.47 L441.50 367.57 L440.65 367.68 L439.78 367.80 L438.87 367.92 L437.93 368.06 L436.95 368.20 L435.92 368.35 L434.86 368.51 L433.78 368.67 L432.67 368.84 L431.55 369.02 L430.42 369.19 L429.29 369.36 L428.18 369.53 L427.07 369.70 L425.99 369.85 L424.93 370.00 L423.90 370.15 L422.88 370.29 L421.87 370.42 L420.87 370.55 L419.87 370.68 L418.88 370.80 L417.89 370.93 L416.91 371.05 L415.92 371.18 L414.93 371.30 L413.94 371.43 L412.94 371.55 Z M356.89 349.28 L356.29 349.54 L355.69 349.80 L355.07 350.05 L354.46 350.30 L353.84 350.56 L353.22 350.81 L352.60 351.07 L352.00 351.35 L351.40 351.63 L350.82 351.93 L350.25 352.25 L349.71 352.59 L349.20 352.94 L348.70 353.29 L348.22 353.64 L347.74 354.01 L347.28 354.39 L346.83 354.78 L346.39 355.20 L345.97 355.63 L345.56 356.09 L345.16 356.58 L344.77 357.09 L344.40 357.63 L344.04 358.21 L343.69 358.83 L343.34 359.49 L343.00 360.17 L342.68 360.87 L342.37 361.59 L342.09 362.32 L341.83 363.05 L341.60 363.77 L341.40 364.49 L341.23 365.20 L341.11 365.88 L341.02 366.54 L340.95 367.21 L340.91 367.88 L340.90 368.56 L340.92 369.23 L340.97 369.90 L341.05 370.56 L341.18 371.20 L341.34 371.83 L341.55 372.44 L341.81 373.03 L342.12 373.58 L342.48 374.09 L342.87 374.56 L343.30 375.00 L343.77 375.41 L344.27 375.79 L344.81 376.13 L345.39 376.45 L345.99 376.75 L346.63 377.01 L347.30 377.25 L347.99 377.47 L348.73 377.67 L349.53 377.84 L350.38 377.97 L351.27 378.07 L352.19 378.15 L353.14 378.20 L354.10 378.23 L355.08 378.25 L356.07 378.26 L357.06 378.26 L358.05 378.27 L359.02 378.28 L359.98 378.30 L360.96 378.32 L361.98 378.34 L363.03 378.36 L364.10 378.37 L365.18 378.37 L366.25 378.37 L367.31 378.37 L368.34 378.37 L369.34 378.36 L370.30 378.34 L371.20 378.32 L372.03 378.30 L372.79 378.28 L373.52 378.27 L374.22 378.27 L374.89 378.26 L375.54 378.25 L376.16 378.24 L376.76 378.21 L377.34 378.15 L377.90 378.08 L378.45 377.96 L378.98 377.81 L379.49 377.60 L379.96 377.34 L380.38 377.03 L380.76 376.68 L381.10 376.31 L381.38 375.91 L381.61 375.48 L381.80 375.05 L381.93 374.60 L382.00 374.14 L382.02 373.68 L381.98 373.22 L381.87 372.77 L381.70 372.34 L381.47 371.93 L381.21 371.54 L380.89 371.15 L380.55 370.77 L380.16 370.40 L379.75 370.04 L379.31 369.68 L378.84 369.34 L378.35 369.02 L377.84 368.71 L377.31 368.43 L376.74 368.16 L376.14 367.91 L375.49 367.67 L374.82 367.44 L374.13 367.23 L373.41 367.03 L372.69 366.83 L371.96 366.64 L371.23 366.47 L370.52 366.29 L369.81 366.13 L369.13 365.96 L368.43 365.81 L367.70 365.68 L366.96 365.57 L366.22 365.47 L365.48 365.37 L364.76 365.28 L364.05 365.19 L363.38 365.09 L362.74 364.98 L362.16 364.87 L361.63 364.73 L361.17 364.58 L360.78 364.42 L360.44 364.23 L360.16 364.04 L359.90 363.83 L359.68 363.61 L359.47 363.38 L359.28 363.13 L359.08 362.88 L358.88 362.61 L358.67 362.35 L358.44 362.08 L358.18 361.83 L357.82 362.17 L358.03 362.43 L358.21 362.69 L358.38 362.96 L358.55 363.23 L358.72 363.52 L358.90 363.81 L359.11 364.10 L359.35 364.39 L359.64 364.67 L359.98 364.94 L360.37 365.19 L360.83 365.42 L361.35 365.62 L361.93 365.78 L362.55 365.93 L363.21 366.06 L363.91 366.17 L364.62 366.28 L365.34 366.39 L366.07 366.50 L366.80 366.61 L367.52 366.74 L368.21 366.88 L368.87 367.04 L369.55 367.21 L370.24 367.39 L370.95 367.57 L371.67 367.76 L372.38 367.96 L373.09 368.16 L373.77 368.37 L374.44 368.59 L375.07 368.82 L375.66 369.06 L376.20 369.31 L376.69 369.57 L377.15 369.85 L377.59 370.15 L378.00 370.47 L378.40 370.80 L378.76 371.14 L379.09 371.48 L379.38 371.82 L379.62 372.15 L379.83 372.46 L379.98 372.76 L380.08 373.02 L380.13 373.23 L380.14 373.42 L380.12 373.62 L380.08 373.82 L380.00 374.03 L379.89 374.25 L379.76 374.45 L379.60 374.65 L379.42 374.84 L379.22 375.01 L379.00 375.16 L378.77 375.29 L378.51 375.40 L378.24 375.49 L377.91 375.56 L377.53 375.62 L377.10 375.66 L376.62 375.69 L376.09 375.70 L375.51 375.70 L374.89 375.70 L374.22 375.69 L373.51 375.69 L372.76 375.69 L371.97 375.70 L371.15 375.72 L370.26 375.73 L369.31 375.74 L368.32 375.74 L367.30 375.75 L366.25 375.75 L365.19 375.75 L364.12 375.74 L363.06 375.74 L362.02 375.73 L361.00 375.72 L360.02 375.70 L359.05 375.69 L358.05 375.69 L357.06 375.70 L356.08 375.71 L355.10 375.71 L354.15 375.71 L353.22 375.70 L352.33 375.67 L351.48 375.62 L350.68 375.55 L349.94 375.46 L349.27 375.33 L348.62 375.18 L348.01 375.01 L347.43 374.82 L346.90 374.62 L346.40 374.41 L345.94 374.18 L345.51 373.93 L345.12 373.67 L344.76 373.38 L344.44 373.08 L344.14 372.76 L343.88 372.42 L343.65 372.06 L343.45 371.65 L343.27 371.21 L343.12 370.72 L343.00 370.21 L342.91 369.66 L342.84 369.10 L342.81 368.52 L342.79 367.92 L342.80 367.32 L342.84 366.72 L342.89 366.12 L342.97 365.52 L343.09 364.89 L343.24 364.23 L343.43 363.55 L343.64 362.86 L343.88 362.16 L344.13 361.47 L344.40 360.80 L344.69 360.14 L344.99 359.51 L345.29 358.92 L345.60 358.37 L345.91 357.86 L346.23 357.37 L346.57 356.92 L346.92 356.48 L347.29 356.06 L347.67 355.65 L348.07 355.26 L348.48 354.88 L348.91 354.51 L349.35 354.14 L349.81 353.77 L350.29 353.41 L350.77 353.06 L351.28 352.73 L351.82 352.41 L352.37 352.10 L352.95 351.80 L353.53 351.50 L354.13 351.21 L354.73 350.92 L355.33 350.63 L355.93 350.33 L356.53 350.03 L357.11 349.72 Z M466.82 344.82 L466.24 344.97 L465.65 345.10 L465.06 345.22 L464.47 345.34 L463.86 345.46 L463.26 345.59 L462.65 345.72 L462.04 345.88 L461.43 346.05 L460.82 346.25 L460.22 346.48 L459.63 346.74 L459.05 347.02 L458.49 347.32 L457.92 347.63 L457.35 347.97 L456.80 348.33 L456.25 348.70 L455.71 349.10 L455.18 349.51 L454.67 349.95 L454.18 350.41 L453.71 350.89 L453.27 351.39 L452.85 351.92 L452.45 352.46 L452.06 353.03 L451.70 353.62 L451.35 354.23 L451.02 354.85 L450.72 355.49 L450.43 356.13 L450.18 356.79 L449.95 357.45 L449.75 358.12 L449.57 358.78 L449.43 359.46 L449.32 360.15 L449.23 360.85 L449.17 361.56 L449.13 362.28 L449.12 363.00 L449.13 363.72 L449.17 364.44 L449.23 365.15 L449.32 365.85 L449.43 366.54 L449.57 367.22 L449.74 367.88 L449.94 368.56 L450.17 369.23 L450.42 369.91 L450.70 370.57 L451.00 371.22 L451.33 371.86 L451.68 372.48 L452.04 373.08 L452.43 373.64 L452.84 374.18 L453.26 374.68 L453.71 375.14 L454.19 375.58 L454.68 375.99 L455.20 376.37 L455.74 376.72 L456.29 377.04 L456.86 377.33 L457.43 377.60 L458.02 377.83 L458.61 378.03 L459.20 378.20 L459.80 378.33 L460.41 378.43 L461.03 378.50 L461.66 378.54 L462.29 378.55 L462.94 378.52 L463.58 378.47 L464.23 378.38 L464.88 378.26 L465.53 378.11 L466.16 377.93 L466.79 377.71 L467.42 377.46 L468.04 377.17 L468.66 376.84 L469.28 376.46 L469.89 376.06 L470.49 375.63 L471.08 375.17 L471.66 374.69 L472.22 374.20 L472.76 373.70 L473.28 373.19 L473.77 372.68 L474.24 372.17 L474.69 371.65 L475.11 371.10 L475.52 370.53 L475.91 369.96 L476.27 369.38 L476.61 368.79 L476.94 368.20 L477.24 367.61 L477.52 367.02 L477.78 366.44 L478.02 365.88 L478.23 365.32 L478.43 364.76 L478.59 364.20 L478.71 363.66 L478.81 363.12 L478.88 362.59 L478.94 362.08 L478.99 361.57 L479.03 361.06 L479.07 360.56 L479.12 360.06 L479.17 359.56 L479.24 359.06 L478.76 358.94 L478.59 359.43 L478.44 359.93 L478.29 360.41 L478.15 360.90 L478.01 361.38 L477.87 361.86 L477.72 362.34 L477.56 362.81 L477.39 363.27 L477.20 363.74 L477.00 364.21 L476.77 364.68 L476.51 365.18 L476.24 365.70 L475.95 366.23 L475.65 366.76 L475.34 367.30 L475.01 367.84 L474.67 368.37 L474.32 368.89 L473.95 369.40 L473.57 369.90 L473.17 370.37 L472.76 370.83 L472.32 371.28 L471.85 371.74 L471.36 372.21 L470.85 372.66 L470.33 373.11 L469.79 373.54 L469.25 373.95 L468.71 374.34 L468.16 374.70 L467.62 375.02 L467.10 375.30 L466.58 375.54 L466.07 375.74 L465.54 375.92 L465.00 376.07 L464.45 376.20 L463.90 376.30 L463.35 376.37 L462.81 376.42 L462.26 376.44 L461.73 376.43 L461.20 376.40 L460.69 376.35 L460.20 376.27 L459.71 376.16 L459.22 376.03 L458.72 375.87 L458.23 375.68 L457.75 375.47 L457.27 375.23 L456.80 374.97 L456.35 374.68 L455.92 374.38 L455.50 374.05 L455.11 373.69 L454.74 373.32 L454.38 372.92 L454.03 372.47 L453.69 371.99 L453.36 371.47 L453.05 370.93 L452.75 370.36 L452.47 369.78 L452.21 369.18 L451.97 368.58 L451.76 367.98 L451.58 367.38 L451.43 366.78 L451.30 366.19 L451.19 365.57 L451.11 364.94 L451.05 364.30 L451.02 363.65 L451.01 363.00 L451.02 362.35 L451.06 361.70 L451.12 361.06 L451.20 360.43 L451.30 359.81 L451.43 359.22 L451.58 358.63 L451.76 358.04 L451.96 357.45 L452.20 356.87 L452.45 356.28 L452.73 355.71 L453.03 355.15 L453.34 354.60 L453.67 354.07 L454.01 353.56 L454.37 353.07 L454.73 352.61 L455.11 352.17 L455.51 351.74 L455.93 351.33 L456.37 350.93 L456.84 350.54 L457.32 350.17 L457.81 349.82 L458.31 349.47 L458.82 349.15 L459.34 348.84 L459.86 348.54 L460.37 348.26 L460.88 348.02 L461.40 347.80 L461.93 347.60 L462.48 347.42 L463.04 347.26 L463.62 347.10 L464.20 346.95 L464.79 346.81 L465.39 346.66 L465.99 346.51 L466.59 346.35 L467.18 346.18 Z M465.74 345.89 L466.04 346.06 L466.38 346.22 L466.72 346.38 L467.06 346.52 L467.38 346.66 L467.68 346.79 L467.96 346.93 L468.20 347.07 L468.39 347.20 L468.53 347.33 L468.61 347.44 L468.66 347.54 L468.72 347.69 L468.78 347.89 L468.83 348.12 L468.87 348.36 L468.90 348.62 L468.90 348.89 L468.89 349.16 L468.85 349.43 L468.79 349.70 L468.72 349.96 L468.62 350.20 L468.50 350.43 L468.35 350.66 L468.15 350.90 L467.90 351.17 L467.60 351.46 L467.26 351.76 L466.88 352.08 L466.48 352.40 L466.06 352.73 L465.62 353.08 L465.17 353.43 L464.73 353.79 L464.30 354.15 L463.88 354.50 L463.44 354.85 L462.95 355.22 L462.45 355.60 L461.93 355.98 L461.41 356.37 L460.89 356.77 L460.38 357.18 L459.91 357.59 L459.46 358.02 L459.05 358.46 L458.69 358.91 L458.40 359.37 L458.16 359.83 L457.97 360.29 L457.81 360.75 L457.70 361.21 L457.62 361.66 L457.57 362.10 L457.55 362.52 L457.54 362.93 L457.55 363.32 L457.57 363.70 L457.60 364.07 L457.65 364.46 L457.73 364.85 L457.84 365.22 L457.96 365.59 L458.11 365.93 L458.27 366.27 L458.44 366.59 L458.62 366.89 L458.81 367.18 L459.00 367.45 L459.20 367.71 L459.40 367.95 L459.62 368.19 L459.87 368.41 L460.12 368.60 L460.37 368.76 L460.62 368.91 L460.88 369.04 L461.13 369.16 L461.38 369.27 L461.62 369.38 L461.86 369.50 L462.09 369.61 L462.32 369.74 L462.68 369.26 L462.49 369.07 L462.29 368.87 L462.08 368.69 L461.88 368.50 L461.69 368.32 L461.50 368.15 L461.32 367.97 L461.15 367.79 L460.99 367.61 L460.85 367.43 L460.72 367.25 L460.60 367.05 L460.47 366.82 L460.33 366.58 L460.18 366.33 L460.05 366.07 L459.92 365.81 L459.80 365.54 L459.69 365.28 L459.59 365.01 L459.51 364.74 L459.45 364.47 L459.42 364.21 L459.40 363.93 L459.39 363.62 L459.39 363.29 L459.40 362.96 L459.42 362.63 L459.45 362.30 L459.50 361.97 L459.57 361.64 L459.67 361.32 L459.78 361.00 L459.93 360.69 L460.10 360.39 L460.31 360.09 L460.56 359.79 L460.88 359.47 L461.26 359.13 L461.69 358.79 L462.16 358.43 L462.66 358.07 L463.17 357.70 L463.70 357.33 L464.23 356.96 L464.74 356.59 L465.24 356.21 L465.70 355.85 L466.12 355.51 L466.55 355.18 L466.98 354.85 L467.43 354.53 L467.87 354.19 L468.31 353.86 L468.73 353.52 L469.14 353.17 L469.53 352.80 L469.89 352.42 L470.22 352.01 L470.50 351.57 L470.72 351.12 L470.88 350.66 L471.00 350.19 L471.08 349.73 L471.11 349.27 L471.10 348.83 L471.06 348.39 L470.98 347.97 L470.87 347.56 L470.73 347.18 L470.56 346.81 L470.34 346.46 L470.05 346.12 L469.71 345.84 L469.35 345.62 L468.99 345.46 L468.62 345.33 L468.25 345.22 L467.89 345.13 L467.54 345.05 L467.19 344.97 L466.87 344.89 L466.56 344.81 L466.26 344.71 Z M371.00 305.95 L371.75 305.96 L372.49 305.97 L373.23 305.97 L373.97 305.98 L374.71 305.99 L375.45 305.99 L376.19 306.00 L376.93 306.01 L377.69 306.02 L378.45 306.03 L379.22 306.04 L380.01 306.05 L380.80 306.06 L381.61 306.07 L382.44 306.09 L383.26 306.10 L384.10 306.11 L384.94 306.12 L385.78 306.14 L386.63 306.16 L387.47 306.18 L388.31 306.20 L389.15 306.22 L389.98 306.25 L390.81 306.28 L391.64 306.32 L392.47 306.35 L393.30 306.39 L394.13 306.44 L394.96 306.48 L395.79 306.53 L396.63 306.57 L397.46 306.62 L398.30 306.66 L399.13 306.71 L399.97 306.75 L400.03 305.65 L399.20 305.59 L398.37 305.52 L397.54 305.46 L396.71 305.38 L395.88 305.31 L395.04 305.25 L394.21 305.18 L393.37 305.12 L392.53 305.06 L391.70 305.02 L390.86 304.98 L390.02 304.95 L389.18 304.93 L388.33 304.93 L387.48 304.93 L386.63 304.94 L385.78 304.95 L384.93 304.98 L384.09 305.00 L383.25 305.03 L382.42 305.06 L381.60 305.09 L380.79 305.12 L379.99 305.15 L379.21 305.18 L378.44 305.22 L377.67 305.25 L376.92 305.29 L376.17 305.34 L375.43 305.38 L374.69 305.43 L373.96 305.47 L373.22 305.52 L372.48 305.56 L371.74 305.61 L371.00 305.65 Z M410.32 301.99 L410.01 302.29 L409.71 302.60 L409.40 302.91 L409.09 303.22 L408.79 303.52 L408.49 303.83 L408.18 304.13 L407.88 304.43 L407.57 304.73 L407.27 305.02 L406.96 305.30 L406.65 305.58 L406.33 305.85 L406.01 306.13 L405.69 306.40 L405.36 306.67 L405.04 306.94 L404.71 307.20 L404.38 307.45 L404.06 307.70 L403.73 307.94 L403.41 308.18 L403.08 308.40 L402.76 308.62 L402.44 308.82 L402.13 309.02 L401.81 309.20 L401.49 309.38 L401.16 309.55 L400.84 309.72 L400.51 309.89 L400.19 310.05 L399.86 310.22 L399.53 310.38 L399.20 310.55 L398.87 310.73 L399.13 311.27 L399.47 311.12 L399.81 310.97 L400.14 310.83 L400.48 310.69 L400.82 310.55 L401.16 310.40 L401.50 310.26 L401.85 310.10 L402.19 309.94 L402.54 309.77 L402.89 309.58 L403.24 309.38 L403.59 309.17 L403.93 308.95 L404.28 308.72 L404.62 308.49 L404.97 308.24 L405.32 307.99 L405.66 307.74 L406.00 307.48 L406.34 307.22 L406.68 306.95 L407.02 306.69 L407.35 306.42 L407.69 306.15 L408.02 305.87 L408.36 305.59 L408.69 305.31 L409.01 305.02 L409.34 304.73 L409.66 304.44 L409.99 304.15 L410.31 303.87 L410.63 303.58 L410.95 303.30 L411.28 303.01 Z M415.72 302.75 L416.06 302.87 L416.40 303.00 L416.73 303.12 L417.07 303.24 L417.40 303.36 L417.73 303.47 L418.06 303.59 L418.38 303.72 L418.71 303.84 L419.03 303.97 L419.36 304.10 L419.68 304.23 L420.00 304.37 L420.33 304.52 L420.65 304.67 L420.98 304.83 L421.31 304.99 L421.65 305.15 L421.98 305.32 L422.32 305.49 L422.65 305.66 L422.99 305.83 L423.33 306.00 L423.66 306.17 L423.98 306.33 L424.29 306.50 L424.61 306.68 L424.92 306.86 L425.24 307.05 L425.57 307.23 L425.90 307.42 L426.25 307.60 L426.60 307.78 L426.97 307.95 L427.35 308.11 L427.75 308.26 L428.15 308.39 L428.57 308.52 L428.99 308.64 L429.41 308.75 L429.85 308.85 L430.28 308.95 L430.72 309.04 L431.15 309.12 L431.59 309.20 L432.02 309.27 L432.45 309.33 L432.87 309.39 L433.30 309.44 L433.73 309.48 L434.16 309.51 L434.58 309.53 L435.01 309.54 L435.43 309.55 L435.85 309.56 L436.27 309.56 L436.69 309.57 L437.11 309.57 L437.53 309.58 L437.94 309.60 L438.06 308.40 L437.64 308.34 L437.22 308.27 L436.81 308.20 L436.39 308.14 L435.98 308.07 L435.57 308.01 L435.16 307.94 L434.75 307.88 L434.34 307.81 L433.94 307.75 L433.54 307.68 L433.13 307.61 L432.71 307.54 L432.29 307.48 L431.86 307.42 L431.44 307.36 L431.02 307.30 L430.59 307.24 L430.18 307.17 L429.77 307.10 L429.37 307.02 L428.99 306.94 L428.61 306.85 L428.25 306.74 L427.91 306.63 L427.58 306.50 L427.26 306.36 L426.94 306.21 L426.62 306.06 L426.30 305.89 L425.99 305.72 L425.67 305.54 L425.34 305.37 L425.02 305.19 L424.68 305.01 L424.34 304.83 L424.01 304.66 L423.68 304.49 L423.35 304.32 L423.02 304.14 L422.69 303.96 L422.35 303.78 L422.02 303.60 L421.68 303.43 L421.35 303.26 L421.01 303.09 L420.66 302.92 L420.32 302.77 L419.98 302.62 L419.63 302.48 L419.29 302.34 L418.95 302.21 L418.61 302.09 L418.27 301.96 L417.94 301.84 L417.60 301.73 L417.27 301.61 L416.94 301.49 L416.61 301.37 L416.28 301.25 Z M407.90 289.53 L408.03 290.23 L408.15 290.92 L408.27 291.62 L408.39 292.32 L408.51 293.02 L408.64 293.73 L408.78 294.45 L408.93 295.18 L409.09 295.92 L409.26 296.67 L409.44 297.42 L409.63 298.18 L409.81 298.94 L410.00 299.69 L410.19 300.45 L410.37 301.19 L412.63 300.41 L412.31 299.70 L411.98 298.99 L411.64 298.29 L411.31 297.58 L410.99 296.89 L410.67 296.19 L410.36 295.50 L410.07 294.82 L409.80 294.15 L409.54 293.48 L409.29 292.81 L409.05 292.14 L408.81 291.48 L408.58 290.81 L408.34 290.14 L408.10 289.47 Z M402.98 299.10 L403.46 299.26 L403.94 299.42 L404.42 299.58 L404.90 299.74 L405.38 299.91 L405.86 300.07 L406.35 300.25 L406.85 300.43 L407.36 300.63 L407.89 300.83 L408.43 301.05 L408.97 301.27 L409.53 301.49 L410.08 301.72 L410.64 301.94 L411.19 302.16 L411.81 299.84 L411.23 299.76 L410.65 299.67 L410.05 299.57 L409.46 299.48 L408.87 299.39 L408.29 299.31 L407.71 299.23 L407.15 299.17 L406.60 299.11 L406.07 299.07 L405.55 299.04 L405.04 299.01 L404.53 298.98 L404.03 298.96 L403.53 298.93 L403.02 298.90 Z M421.41 289.46 L421.04 290.11 L420.68 290.76 L420.33 291.40 L419.97 292.05 L419.61 292.70 L419.23 293.36 L418.85 294.04 L418.45 294.75 L418.04 295.48 L417.61 296.24 L417.17 297.02 L416.72 297.81 L416.27 298.61 L415.81 299.41 L415.36 300.21 L414.91 301.00 L417.09 302.00 L417.40 301.15 L417.71 300.29 L418.03 299.43 L418.34 298.56 L418.65 297.71 L418.96 296.87 L419.26 296.04 L419.55 295.25 L419.82 294.49 L420.09 293.75 L420.34 293.03 L420.59 292.33 L420.84 291.64 L421.09 290.94 L421.34 290.25 L421.59 289.54 Z" fill="#000"/>
 <path d="M403.8 343 Q407.5 337 410.8 332 Q414.5 336.5 417.3 341.2 Q414 338.3 411.2 338.6 Q407.8 339.8 403.8 343 Z" fill="#000"/>
 <!-- ground line -->
 <path d="M334 373.7 H468" stroke="#111" stroke-width="1.3" fill="none"/><path d="M468 373.4 H494" stroke="#444" stroke-width="0.9" fill="none"/>
 <!-- eyes -->
 <path d="M379 311 C381 307.5 395 307 398.2 310 C399.8 314 399.5 322 396 326.5 C391 329 384 328.8 380 325.5 C377.5 321 377.3 314 379 311 Z" fill="#000"/>
 <path d="M433.5 311 C436 308 448 308 451 311.5 C452.5 316 451.5 324 447 328.2 C442 330 436.5 328.5 434 323 C432.5 319 432.3 314 433.5 311 Z" fill="#000"/>
 <!-- crosshair -->
 <g stroke="#000" stroke-width="0.9" fill="none">
  <circle cx="414.5" cy="314.5" r="2.7"/>
  <path d="M414.5 308.8 V311.8 M414.5 317.2 V320.2 M408.8 314.5 H411.8 M417.2 314.5 H420.2" stroke-width="1"/>
 </g>
 <circle cx="414.5" cy="314.5" r="0.7" fill="#000"/>
 <!-- transform box -->
 <rect x="333.5" y="248.5" width="161" height="130" fill="none" stroke="#000" stroke-width="1"/>
 <g fill="#fff" stroke="#000" stroke-width="1">
  <rect x="330.5" y="245.5" width="6" height="6"/><rect x="410.5" y="245.5" width="6" height="6"/><rect x="491.5" y="245.5" width="6" height="6"/>
  <rect x="330.5" y="310.5" width="6" height="6"/><rect x="491.5" y="310.5" width="6" height="6"/>
  <rect x="330.5" y="375.5" width="6" height="6"/><rect x="410.5" y="375.5" width="6" height="6"/><rect x="491.5" y="375.5" width="6" height="6"/>
 </g>
</svg>

<!-- right panels -->
<div class="a" style="left:808px;top:66px;width:7px;height:654px;background:#282828"></div>
<div class="a" style="left:815px;top:67px;width:240px;height:12px;background:#343434;border-top:1px solid #3e3e3e"></div>
<svg style="left:1044px;top:70px" width="8" height="6"><path d="M0 0 L3.5 2.75 L0 5.5 Z M4 0 L7.5 2.75 L4 5.5 Z" fill="#c8c8c8"/></svg>
<div class="a" style="left:815px;top:79px;width:240px;height:18px;background:#3e3e3e;border-top:1px solid #4a4a4a"></div>
<div class="a" style="left:815px;top:79px;width:39px;height:18px;background:#535353"></div>
<div class="t" style="left:822px;top:81px;font-size:12px;color:#e4e4e4">动作</div>
<svg style="left:1037px;top:83px" width="15" height="9"><path d="M6 0 H14 M6 2 H14 M6 4 H14 M6 6 H14 M6 8 H14" stroke="#1e1e1e" stroke-width="1" transform="translate(0,0.5)"/><path d="M6 1.5 H14 M6 3.5 H14 M6 5.5 H14 M6 7.5 H14" stroke="#e8e8e8" stroke-width="1"/><path d="M0 2.5 H5 L2.5 5.5 Z" fill="#ddd"/></svg>
<div class="a" style="left:815px;top:97px;width:240px;height:183px;background:#535353;border-top:1px solid #3a3a3a"></div>
<div class="a" style="left:1039px;top:98px;width:16px;height:182px;background:#464646"></div>
<div class="a" style="left:836px;top:98px;width:1px;height:182px;background:#3f3f3f"></div>

<svg style="left:823px;top:103px" width="10" height="9"><path d="M1 4.5 L4 7.5 L9 1" fill="none" stroke="#c4c4c4" stroke-width="2"/></svg>
<div class="a" style="left:841px;top:102px;width:13px;height:11px;border:1px solid #c0c0c0;background:#5a5a5a"></div><div class="a" style="left:843px;top:104px;width:9px;height:1px;background:#c0c0c0"></div><div class="a" style="left:845px;top:108px;width:5px;height:1px;background:#c0c0c0"></div>
<svg style="left:864px;top:103px" width="7" height="10"><path d="M0 0 L6.5 5 L0 10 Z" fill="#e0e0e0"/></svg>
<svg style="left:878px;top:101px" width="16" height="13"><defs><linearGradient id="fg98" x1="0" y1="0" x2="0" y2="1"><stop offset="0" stop-color="#d4d4d4"/><stop offset="1" stop-color="#a8a8a8"/></linearGradient></defs><path d="M1 1 H6 L7 2.5 H15 V12 H1 Z" fill="url(#fg98)"/></svg>
<div class="t" style="left:902px;top:103px;font-size:12px;color:#ececec">默认动作</div>
<div class="a" style="left:858px;top:118px;width:181px;height:1px;background:#656565"></div>
<svg style="left:823px;top:123px" width="10" height="9"><path d="M1 4.5 L4 7.5 L9 1" fill="none" stroke="#c4c4c4" stroke-width="2"/></svg>
<div class="a" style="left:841px;top:122px;width:13px;height:12px;border:1px solid #3c3c3c;border-top-color:#5e5e5e;border-left-color:#5e5e5e;background:#555"></div>
<svg style="left:862px;top:126px" width="9" height="7"><path d="M0 0 L9 0 L4.5 6.5 Z" fill="#e0e0e0"/></svg>
<svg style="left:877px;top:121px" width="19" height="13"><path d="M2 1 H7 L8 2.5 H15 V6 H2 Z" fill="#8a8a8a" stroke="#bbb" stroke-width="1"/><path d="M0 5.5 H18 L16 12.5 H2 Z" fill="#b8b8b8"/></svg>
<div class="t" style="left:902px;top:123px;font-size:12px;color:#ececec">组 1</div>

<svg style="left:823px;top:143px" width="10" height="9"><path d="M1 4.5 L4 7.5 L9 1" fill="none" stroke="#c4c4c4" stroke-width="2"/></svg>
<div class="a" style="left:841px;top:142px;width:13px;height:12px;border:1px solid #3c3c3c;border-top-color:#5e5e5e;border-left-color:#5e5e5e;background:#555"></div>
<div class="a" style="left:890px;top:140px;width:149px;height:18px;background:#596679;border-bottom:1px solid #363b44"></div>
<svg style="left:880px;top:144px" width="7" height="9"><path d="M0 0 L6 4.5 L0 9 Z" fill="#e0e0e0"/></svg>
<div class="t" style="left:896px;top:143px;font-size:12px;color:#ececec">描边</div>
<svg style="left:823px;top:163px" width="10" height="9"><path d="M1 4.5 L4 7.5 L9 1" fill="none" stroke="#c4c4c4" stroke-width="2"/></svg>
<div class="a" style="left:841px;top:162px;width:13px;height:12px;border:1px solid #3c3c3c;border-top-color:#5e5e5e;border-left-color:#5e5e5e;background:#555"></div>
<svg style="left:880px;top:164px" width="7" height="9"><path d="M0 0 L6 4.5 L0 9 Z" fill="#e0e0e0"/></svg>
<div class="t" style="left:896px;top:163px;font-size:12px;color:#ececec">XP描边</div>
<div class="a" style="left:890px;top:178px;width:149px;height:1px;background:#454545"></div>
<svg style="left:823px;top:183px" width="10" height="9"><path d="M1 4.5 L4 7.5 L9 1" fill="none" stroke="#c4c4c4" stroke-width="2"/></svg>
<div class="a" style="left:841px;top:182px;width:13px;height:12px;border:1px solid #3c3c3c;border-top-color:#5e5e5e;border-left-color:#5e5e5e;background:#555"></div>
<svg style="left:880px;top:184px" width="7" height="9"><path d="M0 0 L6 4.5 L0 9 Z" fill="#e0e0e0"/></svg>
<div class="t" style="left:896px;top:183px;font-size:12px;color:#ececec">RGB颜色</div>
<div class="a" style="left:890px;top:198px;width:149px;height:1px;background:#454545"></div>
<svg style="left:823px;top:203px" width="10" height="9"><path d="M1 4.5 L4 7.5 L9 1" fill="none" stroke="#c4c4c4" stroke-width="2"/></svg>
<div class="a" style="left:841px;top:202px;width:13px;height:12px;border:1px solid #3c3c3c;border-top-color:#5e5e5e;border-left-color:#5e5e5e;background:#555"></div>
<svg style="left:880px;top:204px" width="7" height="9"><path d="M0 0 L6 4.5 L0 9 Z" fill="#e0e0e0"/></svg>
<div class="t" style="left:896px;top:203px;font-size:12px;color:#ececec">600</div>
<div class="a" style="left:890px;top:218px;width:149px;height:1px;background:#454545"></div>
<svg style="left:823px;top:223px" width="10" height="9"><path d="M1 4.5 L4 7.5 L9 1" fill="none" stroke="#c4c4c4" stroke-width="2"/></svg>
<div class="a" style="left:841px;top:222px;width:13px;height:12px;border:1px solid #3c3c3c;border-top-color:#5e5e5e;border-left-color:#5e5e5e;background:#555"></div>
<svg style="left:880px;top:224px" width="7" height="9"><path d="M0 0 L6 4.5 L0 9 Z" fill="#e0e0e0"/></svg>
<div class="t" style="left:896px;top:223px;font-size:12px;color:#ececec">600+描边</div>
<div class="a" style="left:890px;top:238px;width:149px;height:1px;background:#454545"></div>
<svg style="left:823px;top:243px" width="10" height="9"><path d="M1 4.5 L4 7.5 L9 1" fill="none" stroke="#c4c4c4" stroke-width="2"/></svg>
<div class="a" style="left:841px;top:242px;width:13px;height:12px;border:1px solid #3c3c3c;border-top-color:#5e5e5e;border-left-color:#5e5e5e;background:#555"></div>
<svg style="left:880px;top:244px" width="7" height="9"><path d="M0 0 L6 4.5 L0 9 Z" fill="#e0e0e0"/></svg>
<div class="t" style="left:896px;top:243px;font-size:12px;color:#ececec">储存和关闭</div>
<div class="a" style="left:890px;top:258px;width:149px;height:1px;background:#454545"></div>
<svg style="left:823px;top:263px" width="10" height="9"><path d="M1 4.5 L4 7.5 L9 1" fill="none" stroke="#c4c4c4" stroke-width="2"/></svg>
<div class="a" style="left:841px;top:262px;width:13px;height:12px;border:1px solid #3c3c3c;border-top-color:#5e5e5e;border-left-color:#5e5e5e;background:#555"></div>
<svg style="left:880px;top:264px" width="7" height="9"><path d="M0 0 L6 4.5 L0 9 Z" fill="#e0e0e0"/></svg>
<div class="t" style="left:896px;top:263px;font-size:12px;color:#ececec">模糊</div>


<!-- actions footer -->
<div class="a" style="left:815px;top:280px;width:240px;height:18px;background:#4e4e4e;border-top:1px solid #3a3a3a"></div>
<div class="a" style="left:869px;top:284px;width:9px;height:9px;background:#8e8e8e"></div>
<svg style="left:896px;top:283px" width="12" height="12"><circle cx="6" cy="6" r="5" fill="#9a9a9a"/></svg>
<svg style="left:927px;top:283px" width="10" height="11"><path d="M0 0 L9.5 5.5 L0 11 Z" fill="#9a9a9a"/></svg>
<svg style="left:954px;top:283px" width="13" height="11"><path d="M0.5 0.5 H5 L6 2 H12.5 V10.5 H0.5 Z" fill="#a0a0a0"/></svg>
<svg style="left:986px;top:283px" width="11" height="11"><path d="M3 0.5 H10.5 V10.5 H3.5 V7 H0.5 V3 Z" fill="#a8a8a8"/><path d="M0.5 7 L3.5 10.5" stroke="#4e4e4e" stroke-width="1.3"/></svg>
<svg style="left:1014px;top:282px" width="12" height="13"><path d="M0.5 3 H11.5 M4 3 V1 H8 V3 M1.5 4.5 H10.5 L10 12.5 H2 Z" fill="none" stroke="#a0a0a0" stroke-width="1.2"/><path d="M4 6 V11 M6 6 V11 M8 6 V11" stroke="#a0a0a0"/></svg>
<svg style="left:1044px;top:291px" width="10" height="6"><g fill="#b0b0b0"><rect x="4" y="0" width="1" height="1"/><rect x="6" y="0" width="1" height="1"/><rect x="8" y="0" width="1" height="1"/><rect x="2" y="2" width="1" height="1"/><rect x="4" y="2" width="1" height="1"/><rect x="6" y="2" width="1" height="1"/><rect x="8" y="2" width="1" height="1"/><rect x="0" y="4" width="1" height="1"/><rect x="2" y="4" width="1" height="1"/><rect x="4" y="4" width="1" height="1"/><rect x="6" y="4" width="1" height="1"/><rect x="8" y="4" width="1" height="1"/></g></svg>
<div class="a" style="left:815px;top:298px;width:240px;height:3px;background:#2a2a2a"></div>

<!-- layers panel -->
<div class="a" style="left:815px;top:301px;width:240px;height:17px;background:#3e3e3e;border-top:1px solid #4a4a4a"></div>
<div class="a" style="left:815px;top:301px;width:39px;height:17px;background:#535353"></div>
<div class="a" style="left:854px;top:301px;width:1px;height:17px;background:#2e2e2e"></div>
<div class="a" style="left:893px;top:301px;width:1px;height:17px;background:#2e2e2e"></div>
<div class="a" style="left:933px;top:301px;width:1px;height:17px;background:#2e2e2e"></div>
<div class="t" style="left:822px;top:303px;font-size:12px;color:#e4e4e4">图层</div>
<div class="t" style="left:862px;top:303px;font-size:12px;color:#9a9a9a">通道</div>
<div class="t" style="left:901px;top:303px;font-size:12px;color:#9a9a9a">路径</div>
<svg style="left:1037px;top:305px" width="15" height="9"><path d="M6 0 H14 M6 2 H14 M6 4 H14 M6 6 H14 M6 8 H14" stroke="#1e1e1e" stroke-width="1" transform="translate(0,0.5)"/><path d="M6 1.5 H14 M6 3.5 H14 M6 5.5 H14 M6 7.5 H14" stroke="#e8e8e8" stroke-width="1"/><path d="M0 2.5 H5 L2.5 5.5 Z" fill="#ddd"/></svg>
<div class="a" style="left:815px;top:318px;width:240px;height:400px;background:#535353;border-top:1px solid #5e5e5e"></div>
<!-- filter row -->
<div class="a" style="left:820px;top:322px;width:69px;height:19px;background:linear-gradient(#646464,#585858);border:1px solid #363636;border-radius:3px"></div>
<svg style="left:824px;top:326px" width="11" height="11"><circle cx="6.5" cy="4.5" r="3.3" fill="none" stroke="#ccc" stroke-width="1.3"/><path d="M4.2 6.8 L1 10" stroke="#ccc" stroke-width="1.6"/></svg>
<div class="t" style="left:841px;top:325px;font-size:12px;color:#eee">类型</div>
<svg style="left:879px;top:326px" width="6" height="10"><path d="M0 4 L3 0.5 L6 4 Z M0 6 L3 9.5 L6 6 Z" fill="#ddd"/></svg>
<svg style="left:910px;top:325px" width="15" height="13"><rect x="0.5" y="0.5" width="13" height="11" fill="#6a6a6a" stroke="#bdbdbd"/><path d="M2 10 L5 6 L7 8 L9 5.5 L12 10 Z" fill="#bdbdbd"/><circle cx="10.5" cy="3" r="1" fill="#bdbdbd"/></svg>
<svg style="left:935px;top:325px" width="12" height="12"><circle cx="6" cy="6" r="5.2" fill="#bdbdbd"/><path d="M9.7 2.3 A5.2 5.2 0 0 1 2.3 9.7 Z" fill="#555"/><circle cx="6" cy="6" r="5.2" fill="none" stroke="#bdbdbd" stroke-width="1"/></svg>
<svg style="left:959px;top:325px" width="13" height="13"><path d="M0.5 0.5 H12.5 V3.5 H11.5 Q11.5 1.8 10 1.8 H7.3 V11.5 H9 V12.5 H4 V11.5 H5.7 V1.8 H3 Q1.5 1.8 1.5 3.5 H0.5 Z" fill="#bdbdbd"/></svg>
<svg style="left:983px;top:325px" width="13" height="13"><rect x="2" y="2" width="9" height="9" fill="none" stroke="#bdbdbd" stroke-width="1.2"/><g fill="#535353" stroke="#bdbdbd"><circle cx="2" cy="2" r="1.5"/><circle cx="11" cy="2" r="1.5"/><circle cx="2" cy="11" r="1.5"/><circle cx="11" cy="11" r="1.5"/></g></svg>
<svg style="left:1007px;top:325px" width="13" height="13"><path d="M5.5 0.5 H9.5 L12.5 3.5 V12.5 H5.5 Z" fill="#6a6a6a" stroke="#bdbdbd"/><path d="M9.5 0.5 V3.5 H12.5" fill="none" stroke="#bdbdbd"/><rect x="0.5" y="6.5" width="6.5" height="6" fill="#bdbdbd"/></svg>
<div class="a" style="left:1042px;top:323px;width:10px;height:18px;background:#3e3e3e;border:1px solid #333"></div>
<div class="a" style="left:1043px;top:324px;width:8px;height:8px;background:linear-gradient(#8a8a8a,#6a6a6a)"></div>
<div class="a" style="left:815px;top:345px;width:240px;height:1px;background:#3e3e3e"></div>
<div class="a" style="left:815px;top:346px;width:240px;height:1px;background:#5c5c5c"></div>
<!-- blend row -->
<div class="a" style="left:820px;top:350px;width:110px;height:20px;background:linear-gradient(#646464,#585858);border:1px solid #363636;border-radius:3px"></div>
<div class="t" style="left:828px;top:354px;font-size:12px;color:#eee">正常</div>
<svg style="left:920px;top:355px" width="6" height="10"><path d="M0 4 L3 0.5 L6 4 Z M0 6 L3 9.5 L6 6 Z" fill="#ddd"/></svg>
<div class="t" style="left:938px;top:354px;font-size:12px;color:#eee">不透明度:</div>
<div class="a" style="left:995px;top:351px;width:36px;height:19px;background:#333"></div>
<div class="t" style="left:997px;top:354px;font-size:12px;color:#eee;letter-spacing:-0.3px">100%</div>
<div class="a" style="left:1031px;top:351px;width:19px;height:19px;background:linear-gradient(#666,#595959);border:1px solid #3a3a3a;border-left:none;border-radius:0 3px 3px 0"></div>
<svg style="left:1037px;top:359px" width="7" height="4"><path d="M0 0 H7 L3.5 3.5 Z" fill="#ddd"/></svg>
<div class="a" style="left:815px;top:372px;width:240px;height:1px;background:#3e3e3e"></div>
<div class="a" style="left:815px;top:373px;width:240px;height:1px;background:#5c5c5c"></div>
<!-- lock row -->
<div class="t" style="left:822px;top:381px;font-size:12px;color:#eee">锁定:</div>
<svg style="left:859px;top:382px" width="11" height="11"><rect width="11" height="11" fill="#777"/><g fill="#b4b4b4"><rect x="0" y="0" width="3.7" height="3.7"/><rect x="7.3" y="0" width="3.7" height="3.7"/><rect x="3.7" y="3.7" width="3.6" height="3.6"/><rect x="0" y="7.3" width="3.7" height="3.7"/><rect x="7.3" y="7.3" width="3.7" height="3.7"/></g></svg>
<svg style="left:879px;top:380px" width="16" height="14"><path d="M15.5 0.5 L7 9" stroke="#bdbdbd" stroke-width="1.6"/><path d="M7 8 Q4.5 7.5 3.5 10 Q2.5 12.5 0.5 13 Q5 14 7.5 11.5 Q8.5 10 7 8 Z" fill="#bdbdbd"/></svg>
<svg style="left:902px;top:380px" width="14" height="14"><path d="M7 2 V12 M2 7 H12" stroke="#bdbdbd" stroke-width="1.2"/><path d="M7 0 L4.5 3 H9.5 Z M7 14 L4.5 11 H9.5 Z M0 7 L3 4.5 V9.5 Z M14 7 L11 4.5 V9.5 Z" fill="#bdbdbd"/></svg>
<svg style="left:926px;top:380px" width="11" height="14"><path d="M2.5 6 V4 Q2.5 0.8 5.5 0.8 Q8.5 0.8 8.5 4 V6" fill="none" stroke="#bdbdbd" stroke-width="1.5"/><rect x="0.5" y="6" width="10" height="7.5" fill="#bdbdbd"/><rect x="5" y="8.5" width="1.2" height="2.5" fill="#555"/></svg>
<div class="t" style="left:962px;top:382px;font-size:12px;color:#eee">填充:</div>
<div class="a" style="left:995px;top:379px;width:36px;height:19px;background:#333"></div>
<div class="t" style="left:997px;top:382px;font-size:12px;color:#eee;letter-spacing:-0.3px">100%</div>
<div class="a" style="left:1031px;top:379px;width:19px;height:19px;background:linear-gradient(#666,#595959);border:1px solid #3a3a3a;border-left:none;border-radius:0 3px 3px 0"></div>
<svg style="left:1037px;top:387px" width="7" height="4"><path d="M0 0 H7 L3.5 3.5 Z" fill="#ddd"/></svg>
<!-- layer list -->
<div class="a" style="left:815px;top:401px;width:225px;height:99px;background:#535353"></div>
<div class="a" style="left:815px;top:500px;width:225px;height:199px;background:#474747;border-top:1px solid #3a3a3a"></div>
<div class="a" style="left:1040px;top:401px;width:15px;height:298px;background:#464646"></div>
<!-- selected layer -->
<div class="a" style="left:845px;top:404px;width:193px;height:33px;background:#586579"></div>
<div class="a" style="left:845px;top:404px;width:1px;height:33px;background:#3e3e3e"></div>
<div class="a" style="left:845px;top:434px;width:193px;height:1px;background:#2c3038"></div>
<div class="a" style="left:812px;top:402px;width:229px;height:37px;border:3px solid #f29346"></div>
<!-- layer 1 copy -->
<svg style="left:823px;top:414px" width="14" height="10"><path d="M0.5 5 Q7 -2 13.5 5 Q7 12 0.5 5 Z" fill="#aaa"/><circle cx="7" cy="5" r="2.6" fill="#555"/><circle cx="6.3" cy="4.2" r="0.8" fill="#ddd"/></svg>
<svg style="left:847px;top:405px" width="37" height="30"><path d="M1 10 V1 H12 M24 1 H35 V10 M35 19 V28 H24 M12 28 H1 V19" fill="none" stroke="#fff" stroke-width="1.4"/></svg>
<div class="a" style="left:848px;top:406px;width:34px;height:27px;border:2px solid #141820;background:repeating-conic-gradient(#c8c8c8 0 25%,#fff 0 50%) 0 0/8px 8px"></div>

<div class="t" style="left:890px;top:415px;font-size:12px;color:#f0f0f0">图层 1 副本</div>
<!-- layer 1 -->
<div class="a" style="left:845px;top:439px;width:1px;height:61px;background:#3e3e3e"></div>
<div class="a" style="left:815px;top:467px;width:225px;height:1px;background:#3a3a3a"></div>
<svg style="left:823px;top:446px" width="14" height="10"><path d="M0.5 5 Q7 -2 13.5 5 Q7 12 0.5 5 Z" fill="#aaa"/><circle cx="7" cy="5" r="2.6" fill="#555"/><circle cx="6.3" cy="4.2" r="0.8" fill="#ddd"/></svg>
<div class="a" style="left:849px;top:439px;width:32px;height:25px;border:1px solid #111;background:repeating-conic-gradient(#c8c8c8 0 25%,#fff 0 50%) 0 0/8px 8px"></div>
<div class="t" style="left:890px;top:447px;font-size:12px;color:#f0f0f0">图层 1</div>
<!-- background -->
<svg style="left:823px;top:478px" width="14" height="10"><path d="M0.5 5 Q7 -2 13.5 5 Q7 12 0.5 5 Z" fill="#aaa"/><circle cx="7" cy="5" r="2.6" fill="#555"/><circle cx="6.3" cy="4.2" r="0.8" fill="#ddd"/></svg>
<div class="a" style="left:849px;top:471px;width:32px;height:25px;border:1px solid #111;background:#fff"></div>
<div class="t" style="left:894px;top:478px;font-size:11px;color:#f0f0f0;font-style:italic">背景</div>
<svg style="left:1013px;top:477px" width="11" height="14"><path d="M2.5 6 V4 Q2.5 1 5.5 1 Q8.5 1 8.5 4 V6" fill="none" stroke="#c8c8c8" stroke-width="1.2"/><rect x="1" y="6" width="9" height="7" fill="none" stroke="#c8c8c8" stroke-width="1.2"/><rect x="5" y="8.5" width="1.2" height="2" fill="#c8c8c8"/></svg>
<!-- layers footer -->
<div class="a" style="left:815px;top:699px;width:240px;height:19px;background:#535353;border-top:1px solid #5e5e5e"></div>

<!-- bottom bar -->
<div class="a" style="left:43px;top:692px;width:772px;height:6px;background:#282828"></div>
<div class="a" style="left:44px;top:698px;width:768px;height:19px;background:#3a3a3a;border-top:1px solid #4a4a4a"></div>
<div class="a" style="left:45px;top:699px;width:73px;height:17px;background:#3c3c3c"></div>
<div class="t" style="left:52px;top:702px;font-size:12px;color:#9a9a9a">Mini Bridge</div>
<div class="a" style="left:118px;top:699px;width:50px;height:17px;background:#535353"></div>
<div class="t" style="left:124px;top:701px;font-size:13px;color:#e6e6e6">时间轴</div>
<svg style="left:794px;top:703px" width="15" height="9"><path d="M6 0 H14 M6 2 H14 M6 4 H14 M6 6 H14 M6 8 H14" stroke="#1e1e1e" stroke-width="1" transform="translate(0,0.5)"/><path d="M6 1.5 H14 M6 3.5 H14 M6 5.5 H14 M6 7.5 H14" stroke="#e8e8e8" stroke-width="1"/><path d="M0 2.5 H5 L2.5 5.5 Z" fill="#ddd"/></svg>
<div class="a" style="left:44px;top:716px;width:768px;height:1px;background:#4a4a4a"></div>
<div class="a" style="left:0px;top:719px;width:1060px;height:3px;background:#000"></div>
<!-- layers footer icons -->
<svg style="left:852px;top:704px" width="14" height="8"><path d="M5 1 H3.5 a3 3 0 0 0 0 6 H5 M9 1 H10.5 a3 3 0 0 1 0 6 H9 M4 4 H10" fill="none" stroke="#a8a8a8" stroke-width="1.5"/></svg>
<div class="t" style="left:881px;top:702px;font:italic 13px 'Liberation Serif',serif;color:#a8a8a8">fx</div>
<svg style="left:894px;top:713px" width="4" height="3"><path d="M0 0 H4 L2 2.5 Z" fill="#ccc"/></svg>
<svg style="left:909px;top:703px" width="13" height="11"><rect x="0" y="0" width="13" height="11" fill="#a8a8a8"/><circle cx="6.5" cy="5.5" r="3.5" fill="#555"/></svg>
<svg style="left:934px;top:703px" width="12" height="12"><circle cx="6" cy="6" r="5" fill="none" stroke="#a8a8a8" stroke-width="1.3"/><path d="M9.5 2.5 A5 5 0 0 1 2.5 9.5 Z" fill="#a8a8a8"/></svg>
<svg style="left:947px;top:713px" width="4" height="3"><path d="M0 0 H4 L2 2.5 Z" fill="#ccc"/></svg>
<svg style="left:961px;top:703px" width="13" height="11"><path d="M0.5 0.5 H5 L6 2 H12.5 V10.5 H0.5 Z" fill="#a0a0a0"/></svg>
<svg style="left:988px;top:702px" width="11" height="12"><path d="M3 0.5 H10.5 V11.5 H3.5 V8 H0.5 V3 Z" fill="#a8a8a8"/><path d="M0.5 8 L3.5 11.5" stroke="#535353" stroke-width="1.3"/></svg>
<svg style="left:1015px;top:702px" width="11" height="12"><path d="M0.5 2.5 H10.5 M3.5 2.5 V0.8 H7.5 V2.5 M1.5 4 H9.5 L9 11.5 H2 Z" fill="none" stroke="#a8a8a8" stroke-width="1.1"/><path d="M4 5.5 V10 M5.5 5.5 V10 M7 5.5 V10" stroke="#a8a8a8" stroke-width="0.8"/></svg>
<!-- watermark -->
<svg style="left:0;top:0" width="1060" height="722">
 <!-- roof -->
 <path d="M884.5 692 L929.5 667 L943 680.5 L937 684 L928 676.5 L897 692 Z" fill="#fff"/>
 <!-- e body -->
 <path d="M906 685 L942 682 V689 L907 691 Z" fill="#fff"/>
 <path d="M920 692 L942 691 V697 H920 Z" fill="#fff"/>
 <path d="M898 704 H938 V711 L935 713 H898 Z" fill="#fff"/>
 <path d="M898 689 L907 685 V713 H898 Z" fill="#fff"/>
 <g fill="#fff">
  <rect x="942" y="682" width="4" height="4"/><rect x="950" y="682" width="3" height="3"/>
  <rect x="946" y="686" width="4" height="4"/><rect x="953" y="687" width="3" height="3"/>
  <rect x="942" y="690" width="4" height="4"/><rect x="950" y="690" width="4" height="4"/>
  <rect x="946" y="694" width="4" height="4"/>
  <rect x="942" y="698" width="4" height="4"/><rect x="950" y="698" width="3" height="3"/>
  <rect x="946" y="702" width="3" height="4"/><rect x="940" y="706" width="3" height="5"/>
 </g>
</svg>
<div class="t" style="left:959px;top:672px;font:bold 23px 'Liberation Sans',sans-serif;color:#fff;-webkit-text-stroke:0.6px #fff">系统之家</div>
<div class="t" style="left:952px;top:704px;font:10px 'Liberation Serif',serif;color:#fff;letter-spacing:0.55px">XITONGZHIJIA.NET</div>

</body>
</html>
